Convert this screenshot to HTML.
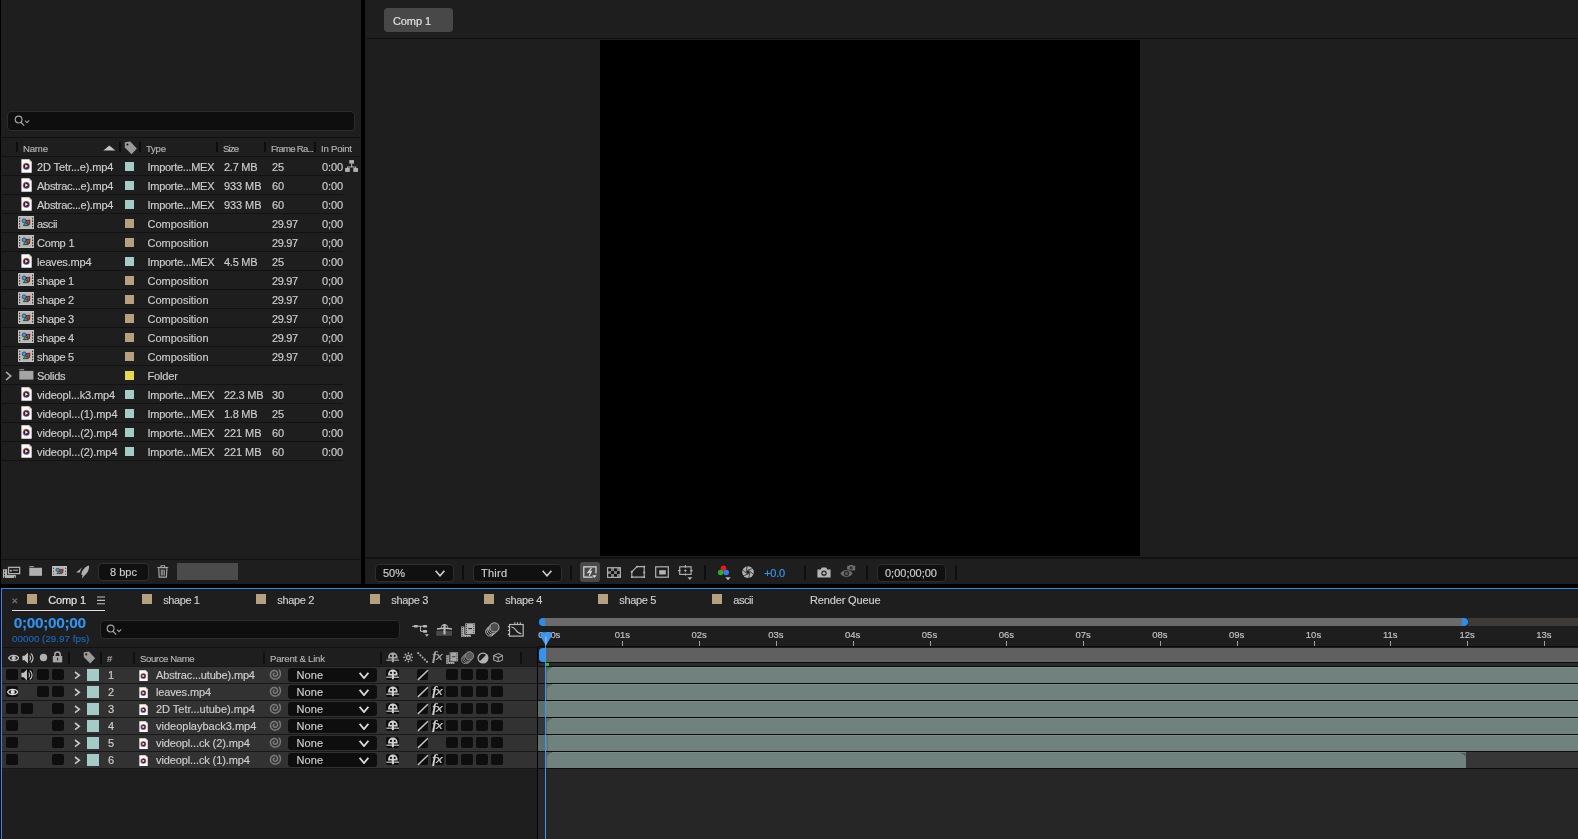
<!DOCTYPE html>
<html lang="en"><head><meta charset="utf-8"><title>After Effects</title>
<style>
html,body{margin:0;padding:0;background:#000;}
body{width:1578px;height:839px;overflow:hidden;position:relative;font-family:"Liberation Sans",sans-serif;}
#app{position:absolute;left:0;top:0;width:1578px;height:839px;overflow:hidden;background:#000;will-change:transform;}
#app div,#app span,#app svg{position:absolute;display:block;}
#app span{white-space:nowrap;-webkit-text-stroke:0.16px;}
</style></head><body><div id="app">
<div style="left:1px;top:0px;width:360px;height:584px;background:#1e1e1e;"></div>
<div style="left:7px;top:111px;width:348px;height:20px;background:#0e0e0e;border:1px solid #2c2c2c;border-radius:4px;box-sizing:border-box;"></div>
<svg style="left:14px;top:115px;" width="17" height="12" viewBox="0 0 17 12"><circle cx="4.6" cy="4.6" r="3.4" fill="none" stroke="#a0a0a0" stroke-width="1.2"/><path d="M7 7.2 L10.2 10.6" stroke="#a0a0a0" stroke-width="1.3" fill="none"/><path d="M11 5.6 L13 7.6 L15.2 5.4" stroke="#a0a0a0" stroke-width="1.1" fill="none"/></svg>
<div style="left:2px;top:137px;width:358px;height:1px;background:#121212;"></div>
<div style="left:2px;top:156px;width:358px;height:1px;background:#121212;"></div>
<div style="left:16.3px;top:142px;width:2px;height:10px;background:#0c0c0c;"></div>
<div style="left:118.5px;top:142px;width:2px;height:10px;background:#0c0c0c;"></div>
<div style="left:139.4px;top:142px;width:2px;height:10px;background:#0c0c0c;"></div>
<div style="left:216.3px;top:142px;width:2px;height:10px;background:#0c0c0c;"></div>
<div style="left:264.4px;top:142px;width:2px;height:10px;background:#0c0c0c;"></div>
<div style="left:314px;top:142px;width:2px;height:10px;background:#0c0c0c;"></div>
<span style="left:23.00px;top:144.07px;font-size:9.6px;line-height:9.6px;color:#b2b2b2;letter-spacing:-0.203px;">Name</span>
<svg style="left:103px;top:144.5px;" width="13" height="6" viewBox="0 0 13 6"><path d="M0.3 5.6 L6.3 0.4 L12.3 5.6 Z" fill="#c4c4c4"/></svg>
<svg style="left:124px;top:141px;" width="14.0" height="14.0" viewBox="0 0 14 14"><path d="M0.8 1.2 L6.2 0.6 L12.8 7.6 L7.6 13.2 L0.8 6.4 Z" fill="#9a9a9a"/><circle cx="3.4" cy="3.6" r="1.1" fill="#1e1e1e"/></svg>
<span style="left:146.00px;top:144.07px;font-size:9.6px;line-height:9.6px;color:#b2b2b2;letter-spacing:-0.271px;">Type</span>
<span style="left:223.00px;top:144.07px;font-size:9.6px;line-height:9.6px;color:#b2b2b2;letter-spacing:-0.892px;">Size</span>
<span style="left:271.00px;top:144.07px;font-size:9.6px;line-height:9.6px;color:#b2b2b2;letter-spacing:-0.768px;">Frame Ra...</span>
<span style="left:321.00px;top:144.07px;font-size:9.6px;line-height:9.6px;color:#b2b2b2;letter-spacing:-0.222px;">In Point</span>
<div style="left:2px;top:175px;width:341px;height:1px;background:#121212;"></div>
<svg style="left:20.5px;top:159px;" width="11.0" height="14.0" viewBox="0 0 11 14"><defs><linearGradient id="rg" x1="0" y1="0" x2="0" y2="1"><stop offset="0" stop-color="#e8833a"/><stop offset="0.55" stop-color="#b0508a"/><stop offset="1" stop-color="#6a3fb0"/></linearGradient></defs><path d="M0.4 0.3 H8.2 L10.7 2.8 V13.7 H0.4 Z" fill="#fbfbfb"/><path d="M8.2 0.3 V2.8 H10.7 Z" fill="#bdbdbd"/><circle cx="5.3" cy="7.2" r="3.5" fill="url(#rg)"/><circle cx="5.3" cy="7.2" r="2.6" fill="#2a2230"/><path d="M4.3 5.5 L7.0 7.2 L4.3 8.9 Z" fill="#fff"/></svg>
<span style="left:37.00px;top:161.69px;font-size:11px;line-height:11px;color:#cdcdcd;letter-spacing:-0.110px;">2D Tetr...e).mp4</span>
<div style="left:125px;top:162px;width:9px;height:9px;background:#a5cbc7;"></div>
<span style="left:147.50px;top:161.69px;font-size:11px;line-height:11px;color:#cdcdcd;letter-spacing:-0.275px;">Importe...MEX</span>
<span style="left:224.00px;top:161.69px;font-size:11px;line-height:11px;color:#cdcdcd;letter-spacing:-0.270px;">2.7 MB</span>
<span style="left:272.00px;top:161.69px;font-size:11px;line-height:11px;color:#cdcdcd;letter-spacing:-0.236px;">25</span>
<span style="left:322.00px;top:161.69px;font-size:11px;line-height:11px;color:#cdcdcd;letter-spacing:-0.137px;">0:00</span>
<div style="left:2px;top:194px;width:341px;height:1px;background:#121212;"></div>
<svg style="left:20.5px;top:178px;" width="11.0" height="14.0" viewBox="0 0 11 14"><defs><linearGradient id="rg" x1="0" y1="0" x2="0" y2="1"><stop offset="0" stop-color="#e8833a"/><stop offset="0.55" stop-color="#b0508a"/><stop offset="1" stop-color="#6a3fb0"/></linearGradient></defs><path d="M0.4 0.3 H8.2 L10.7 2.8 V13.7 H0.4 Z" fill="#fbfbfb"/><path d="M8.2 0.3 V2.8 H10.7 Z" fill="#bdbdbd"/><circle cx="5.3" cy="7.2" r="3.5" fill="url(#rg)"/><circle cx="5.3" cy="7.2" r="2.6" fill="#2a2230"/><path d="M4.3 5.5 L7.0 7.2 L4.3 8.9 Z" fill="#fff"/></svg>
<span style="left:37.00px;top:180.69px;font-size:11px;line-height:11px;color:#cdcdcd;letter-spacing:-0.287px;">Abstrac...e).mp4</span>
<div style="left:125px;top:181px;width:9px;height:9px;background:#a5cbc7;"></div>
<span style="left:147.50px;top:180.69px;font-size:11px;line-height:11px;color:#cdcdcd;letter-spacing:-0.275px;">Importe...MEX</span>
<span style="left:224.00px;top:180.69px;font-size:11px;line-height:11px;color:#cdcdcd;letter-spacing:-0.082px;">933 MB</span>
<span style="left:272.00px;top:180.69px;font-size:11px;line-height:11px;color:#cdcdcd;letter-spacing:-0.236px;">60</span>
<span style="left:322.00px;top:180.69px;font-size:11px;line-height:11px;color:#cdcdcd;letter-spacing:-0.137px;">0:00</span>
<div style="left:2px;top:213px;width:341px;height:1px;background:#121212;"></div>
<svg style="left:20.5px;top:197px;" width="11.0" height="14.0" viewBox="0 0 11 14"><defs><linearGradient id="rg" x1="0" y1="0" x2="0" y2="1"><stop offset="0" stop-color="#e8833a"/><stop offset="0.55" stop-color="#b0508a"/><stop offset="1" stop-color="#6a3fb0"/></linearGradient></defs><path d="M0.4 0.3 H8.2 L10.7 2.8 V13.7 H0.4 Z" fill="#fbfbfb"/><path d="M8.2 0.3 V2.8 H10.7 Z" fill="#bdbdbd"/><circle cx="5.3" cy="7.2" r="3.5" fill="url(#rg)"/><circle cx="5.3" cy="7.2" r="2.6" fill="#2a2230"/><path d="M4.3 5.5 L7.0 7.2 L4.3 8.9 Z" fill="#fff"/></svg>
<span style="left:37.00px;top:199.69px;font-size:11px;line-height:11px;color:#cdcdcd;letter-spacing:-0.287px;">Abstrac...e).mp4</span>
<div style="left:125px;top:200px;width:9px;height:9px;background:#a5cbc7;"></div>
<span style="left:147.50px;top:199.69px;font-size:11px;line-height:11px;color:#cdcdcd;letter-spacing:-0.275px;">Importe...MEX</span>
<span style="left:224.00px;top:199.69px;font-size:11px;line-height:11px;color:#cdcdcd;letter-spacing:-0.082px;">933 MB</span>
<span style="left:272.00px;top:199.69px;font-size:11px;line-height:11px;color:#cdcdcd;letter-spacing:-0.236px;">60</span>
<span style="left:322.00px;top:199.69px;font-size:11px;line-height:11px;color:#cdcdcd;letter-spacing:-0.137px;">0:00</span>
<div style="left:2px;top:232px;width:341px;height:1px;background:#121212;"></div>
<svg style="left:17.8px;top:216px;" width="16.3" height="13" viewBox="0 0 16.3 13" preserveAspectRatio="none"><rect x="0" y="0" width="16.3" height="13" rx="0.7" fill="#c2c2c2"/><rect x="3.3" y="0.8" width="9.7" height="11.4" fill="#b6b6b6"/><rect x="1.15" y="1.57" width="1.1" height="1.6" rx="0.5" fill="#2a2a2a"/><rect x="14.05" y="1.57" width="1.1" height="1.6" rx="0.5" fill="#2a2a2a"/><rect x="1.15" y="4.33" width="1.1" height="1.6" rx="0.5" fill="#2a2a2a"/><rect x="14.05" y="4.33" width="1.1" height="1.6" rx="0.5" fill="#2a2a2a"/><rect x="1.15" y="7.08" width="1.1" height="1.6" rx="0.5" fill="#2a2a2a"/><rect x="14.05" y="7.08" width="1.1" height="1.6" rx="0.5" fill="#2a2a2a"/><rect x="1.15" y="9.82" width="1.1" height="1.6" rx="0.5" fill="#2a2a2a"/><rect x="14.05" y="9.82" width="1.1" height="1.6" rx="0.5" fill="#2a2a2a"/><path d="M8.0 4.6 L11.9 4.2 L11.5 8.4 L10.3 8.9 Z" fill="#e8331c" stroke="#1c1c1c" stroke-width="0.7" stroke-linejoin="round"/><path d="M5.3 9.6 L7.7 6.4 L10.2 9.6 Z" fill="#21b573" stroke="#1c1c1c" stroke-width="0.7" stroke-linejoin="round"/><circle cx="6.1" cy="4.9" r="2.0" fill="#3a9bf4" stroke="#1c1c1c" stroke-width="0.6"/></svg>
<span style="left:37.00px;top:218.69px;font-size:11px;line-height:11px;color:#cdcdcd;letter-spacing:-0.376px;">ascii</span>
<div style="left:125px;top:219px;width:9px;height:9px;background:#b5a17f;"></div>
<span style="left:147.50px;top:218.69px;font-size:11px;line-height:11px;color:#cdcdcd;letter-spacing:-0.014px;">Composition</span>
<span style="left:272.00px;top:218.69px;font-size:11px;line-height:11px;color:#cdcdcd;letter-spacing:-0.382px;">29.97</span>
<span style="left:322.00px;top:218.69px;font-size:11px;line-height:11px;color:#cdcdcd;letter-spacing:-0.137px;">0;00</span>
<div style="left:2px;top:251px;width:341px;height:1px;background:#121212;"></div>
<svg style="left:17.8px;top:235px;" width="16.3" height="13" viewBox="0 0 16.3 13" preserveAspectRatio="none"><rect x="0" y="0" width="16.3" height="13" rx="0.7" fill="#c2c2c2"/><rect x="3.3" y="0.8" width="9.7" height="11.4" fill="#b6b6b6"/><rect x="1.15" y="1.57" width="1.1" height="1.6" rx="0.5" fill="#2a2a2a"/><rect x="14.05" y="1.57" width="1.1" height="1.6" rx="0.5" fill="#2a2a2a"/><rect x="1.15" y="4.33" width="1.1" height="1.6" rx="0.5" fill="#2a2a2a"/><rect x="14.05" y="4.33" width="1.1" height="1.6" rx="0.5" fill="#2a2a2a"/><rect x="1.15" y="7.08" width="1.1" height="1.6" rx="0.5" fill="#2a2a2a"/><rect x="14.05" y="7.08" width="1.1" height="1.6" rx="0.5" fill="#2a2a2a"/><rect x="1.15" y="9.82" width="1.1" height="1.6" rx="0.5" fill="#2a2a2a"/><rect x="14.05" y="9.82" width="1.1" height="1.6" rx="0.5" fill="#2a2a2a"/><path d="M8.0 4.6 L11.9 4.2 L11.5 8.4 L10.3 8.9 Z" fill="#e8331c" stroke="#1c1c1c" stroke-width="0.7" stroke-linejoin="round"/><path d="M5.3 9.6 L7.7 6.4 L10.2 9.6 Z" fill="#21b573" stroke="#1c1c1c" stroke-width="0.7" stroke-linejoin="round"/><circle cx="6.1" cy="4.9" r="2.0" fill="#3a9bf4" stroke="#1c1c1c" stroke-width="0.6"/></svg>
<span style="left:37.00px;top:237.69px;font-size:11px;line-height:11px;color:#cdcdcd;letter-spacing:-0.203px;">Comp 1</span>
<div style="left:125px;top:238px;width:9px;height:9px;background:#b5a17f;"></div>
<span style="left:147.50px;top:237.69px;font-size:11px;line-height:11px;color:#cdcdcd;letter-spacing:-0.014px;">Composition</span>
<span style="left:272.00px;top:237.69px;font-size:11px;line-height:11px;color:#cdcdcd;letter-spacing:-0.382px;">29.97</span>
<span style="left:322.00px;top:237.69px;font-size:11px;line-height:11px;color:#cdcdcd;letter-spacing:-0.137px;">0;00</span>
<div style="left:2px;top:270px;width:341px;height:1px;background:#121212;"></div>
<svg style="left:20.5px;top:254px;" width="11.0" height="14.0" viewBox="0 0 11 14"><defs><linearGradient id="rg" x1="0" y1="0" x2="0" y2="1"><stop offset="0" stop-color="#e8833a"/><stop offset="0.55" stop-color="#b0508a"/><stop offset="1" stop-color="#6a3fb0"/></linearGradient></defs><path d="M0.4 0.3 H8.2 L10.7 2.8 V13.7 H0.4 Z" fill="#fbfbfb"/><path d="M8.2 0.3 V2.8 H10.7 Z" fill="#bdbdbd"/><circle cx="5.3" cy="7.2" r="3.5" fill="url(#rg)"/><circle cx="5.3" cy="7.2" r="2.6" fill="#2a2230"/><path d="M4.3 5.5 L7.0 7.2 L4.3 8.9 Z" fill="#fff"/></svg>
<span style="left:37.00px;top:256.69px;font-size:11px;line-height:11px;color:#cdcdcd;letter-spacing:-0.195px;">leaves.mp4</span>
<div style="left:125px;top:257px;width:9px;height:9px;background:#a5cbc7;"></div>
<span style="left:147.50px;top:256.69px;font-size:11px;line-height:11px;color:#cdcdcd;letter-spacing:-0.275px;">Importe...MEX</span>
<span style="left:224.00px;top:256.69px;font-size:11px;line-height:11px;color:#cdcdcd;letter-spacing:-0.270px;">4.5 MB</span>
<span style="left:272.00px;top:256.69px;font-size:11px;line-height:11px;color:#cdcdcd;letter-spacing:-0.236px;">25</span>
<span style="left:322.00px;top:256.69px;font-size:11px;line-height:11px;color:#cdcdcd;letter-spacing:-0.137px;">0:00</span>
<div style="left:2px;top:289px;width:341px;height:1px;background:#121212;"></div>
<svg style="left:17.8px;top:273px;" width="16.3" height="13" viewBox="0 0 16.3 13" preserveAspectRatio="none"><rect x="0" y="0" width="16.3" height="13" rx="0.7" fill="#c2c2c2"/><rect x="3.3" y="0.8" width="9.7" height="11.4" fill="#b6b6b6"/><rect x="1.15" y="1.57" width="1.1" height="1.6" rx="0.5" fill="#2a2a2a"/><rect x="14.05" y="1.57" width="1.1" height="1.6" rx="0.5" fill="#2a2a2a"/><rect x="1.15" y="4.33" width="1.1" height="1.6" rx="0.5" fill="#2a2a2a"/><rect x="14.05" y="4.33" width="1.1" height="1.6" rx="0.5" fill="#2a2a2a"/><rect x="1.15" y="7.08" width="1.1" height="1.6" rx="0.5" fill="#2a2a2a"/><rect x="14.05" y="7.08" width="1.1" height="1.6" rx="0.5" fill="#2a2a2a"/><rect x="1.15" y="9.82" width="1.1" height="1.6" rx="0.5" fill="#2a2a2a"/><rect x="14.05" y="9.82" width="1.1" height="1.6" rx="0.5" fill="#2a2a2a"/><path d="M8.0 4.6 L11.9 4.2 L11.5 8.4 L10.3 8.9 Z" fill="#e8331c" stroke="#1c1c1c" stroke-width="0.7" stroke-linejoin="round"/><path d="M5.3 9.6 L7.7 6.4 L10.2 9.6 Z" fill="#21b573" stroke="#1c1c1c" stroke-width="0.7" stroke-linejoin="round"/><circle cx="6.1" cy="4.9" r="2.0" fill="#3a9bf4" stroke="#1c1c1c" stroke-width="0.6"/></svg>
<span style="left:37.00px;top:275.69px;font-size:11px;line-height:11px;color:#cdcdcd;letter-spacing:-0.358px;">shape 1</span>
<div style="left:125px;top:276px;width:9px;height:9px;background:#b5a17f;"></div>
<span style="left:147.50px;top:275.69px;font-size:11px;line-height:11px;color:#cdcdcd;letter-spacing:-0.014px;">Composition</span>
<span style="left:272.00px;top:275.69px;font-size:11px;line-height:11px;color:#cdcdcd;letter-spacing:-0.382px;">29.97</span>
<span style="left:322.00px;top:275.69px;font-size:11px;line-height:11px;color:#cdcdcd;letter-spacing:-0.137px;">0;00</span>
<div style="left:2px;top:308px;width:341px;height:1px;background:#121212;"></div>
<svg style="left:17.8px;top:292px;" width="16.3" height="13" viewBox="0 0 16.3 13" preserveAspectRatio="none"><rect x="0" y="0" width="16.3" height="13" rx="0.7" fill="#c2c2c2"/><rect x="3.3" y="0.8" width="9.7" height="11.4" fill="#b6b6b6"/><rect x="1.15" y="1.57" width="1.1" height="1.6" rx="0.5" fill="#2a2a2a"/><rect x="14.05" y="1.57" width="1.1" height="1.6" rx="0.5" fill="#2a2a2a"/><rect x="1.15" y="4.33" width="1.1" height="1.6" rx="0.5" fill="#2a2a2a"/><rect x="14.05" y="4.33" width="1.1" height="1.6" rx="0.5" fill="#2a2a2a"/><rect x="1.15" y="7.08" width="1.1" height="1.6" rx="0.5" fill="#2a2a2a"/><rect x="14.05" y="7.08" width="1.1" height="1.6" rx="0.5" fill="#2a2a2a"/><rect x="1.15" y="9.82" width="1.1" height="1.6" rx="0.5" fill="#2a2a2a"/><rect x="14.05" y="9.82" width="1.1" height="1.6" rx="0.5" fill="#2a2a2a"/><path d="M8.0 4.6 L11.9 4.2 L11.5 8.4 L10.3 8.9 Z" fill="#e8331c" stroke="#1c1c1c" stroke-width="0.7" stroke-linejoin="round"/><path d="M5.3 9.6 L7.7 6.4 L10.2 9.6 Z" fill="#21b573" stroke="#1c1c1c" stroke-width="0.7" stroke-linejoin="round"/><circle cx="6.1" cy="4.9" r="2.0" fill="#3a9bf4" stroke="#1c1c1c" stroke-width="0.6"/></svg>
<span style="left:37.00px;top:294.69px;font-size:11px;line-height:11px;color:#cdcdcd;letter-spacing:-0.358px;">shape 2</span>
<div style="left:125px;top:295px;width:9px;height:9px;background:#b5a17f;"></div>
<span style="left:147.50px;top:294.69px;font-size:11px;line-height:11px;color:#cdcdcd;letter-spacing:-0.014px;">Composition</span>
<span style="left:272.00px;top:294.69px;font-size:11px;line-height:11px;color:#cdcdcd;letter-spacing:-0.382px;">29.97</span>
<span style="left:322.00px;top:294.69px;font-size:11px;line-height:11px;color:#cdcdcd;letter-spacing:-0.137px;">0;00</span>
<div style="left:2px;top:327px;width:341px;height:1px;background:#121212;"></div>
<svg style="left:17.8px;top:311px;" width="16.3" height="13" viewBox="0 0 16.3 13" preserveAspectRatio="none"><rect x="0" y="0" width="16.3" height="13" rx="0.7" fill="#c2c2c2"/><rect x="3.3" y="0.8" width="9.7" height="11.4" fill="#b6b6b6"/><rect x="1.15" y="1.57" width="1.1" height="1.6" rx="0.5" fill="#2a2a2a"/><rect x="14.05" y="1.57" width="1.1" height="1.6" rx="0.5" fill="#2a2a2a"/><rect x="1.15" y="4.33" width="1.1" height="1.6" rx="0.5" fill="#2a2a2a"/><rect x="14.05" y="4.33" width="1.1" height="1.6" rx="0.5" fill="#2a2a2a"/><rect x="1.15" y="7.08" width="1.1" height="1.6" rx="0.5" fill="#2a2a2a"/><rect x="14.05" y="7.08" width="1.1" height="1.6" rx="0.5" fill="#2a2a2a"/><rect x="1.15" y="9.82" width="1.1" height="1.6" rx="0.5" fill="#2a2a2a"/><rect x="14.05" y="9.82" width="1.1" height="1.6" rx="0.5" fill="#2a2a2a"/><path d="M8.0 4.6 L11.9 4.2 L11.5 8.4 L10.3 8.9 Z" fill="#e8331c" stroke="#1c1c1c" stroke-width="0.7" stroke-linejoin="round"/><path d="M5.3 9.6 L7.7 6.4 L10.2 9.6 Z" fill="#21b573" stroke="#1c1c1c" stroke-width="0.7" stroke-linejoin="round"/><circle cx="6.1" cy="4.9" r="2.0" fill="#3a9bf4" stroke="#1c1c1c" stroke-width="0.6"/></svg>
<span style="left:37.00px;top:313.69px;font-size:11px;line-height:11px;color:#cdcdcd;letter-spacing:-0.358px;">shape 3</span>
<div style="left:125px;top:314px;width:9px;height:9px;background:#b5a17f;"></div>
<span style="left:147.50px;top:313.69px;font-size:11px;line-height:11px;color:#cdcdcd;letter-spacing:-0.014px;">Composition</span>
<span style="left:272.00px;top:313.69px;font-size:11px;line-height:11px;color:#cdcdcd;letter-spacing:-0.382px;">29.97</span>
<span style="left:322.00px;top:313.69px;font-size:11px;line-height:11px;color:#cdcdcd;letter-spacing:-0.137px;">0;00</span>
<div style="left:2px;top:346px;width:341px;height:1px;background:#121212;"></div>
<svg style="left:17.8px;top:330px;" width="16.3" height="13" viewBox="0 0 16.3 13" preserveAspectRatio="none"><rect x="0" y="0" width="16.3" height="13" rx="0.7" fill="#c2c2c2"/><rect x="3.3" y="0.8" width="9.7" height="11.4" fill="#b6b6b6"/><rect x="1.15" y="1.57" width="1.1" height="1.6" rx="0.5" fill="#2a2a2a"/><rect x="14.05" y="1.57" width="1.1" height="1.6" rx="0.5" fill="#2a2a2a"/><rect x="1.15" y="4.33" width="1.1" height="1.6" rx="0.5" fill="#2a2a2a"/><rect x="14.05" y="4.33" width="1.1" height="1.6" rx="0.5" fill="#2a2a2a"/><rect x="1.15" y="7.08" width="1.1" height="1.6" rx="0.5" fill="#2a2a2a"/><rect x="14.05" y="7.08" width="1.1" height="1.6" rx="0.5" fill="#2a2a2a"/><rect x="1.15" y="9.82" width="1.1" height="1.6" rx="0.5" fill="#2a2a2a"/><rect x="14.05" y="9.82" width="1.1" height="1.6" rx="0.5" fill="#2a2a2a"/><path d="M8.0 4.6 L11.9 4.2 L11.5 8.4 L10.3 8.9 Z" fill="#e8331c" stroke="#1c1c1c" stroke-width="0.7" stroke-linejoin="round"/><path d="M5.3 9.6 L7.7 6.4 L10.2 9.6 Z" fill="#21b573" stroke="#1c1c1c" stroke-width="0.7" stroke-linejoin="round"/><circle cx="6.1" cy="4.9" r="2.0" fill="#3a9bf4" stroke="#1c1c1c" stroke-width="0.6"/></svg>
<span style="left:37.00px;top:332.69px;font-size:11px;line-height:11px;color:#cdcdcd;letter-spacing:-0.358px;">shape 4</span>
<div style="left:125px;top:333px;width:9px;height:9px;background:#b5a17f;"></div>
<span style="left:147.50px;top:332.69px;font-size:11px;line-height:11px;color:#cdcdcd;letter-spacing:-0.014px;">Composition</span>
<span style="left:272.00px;top:332.69px;font-size:11px;line-height:11px;color:#cdcdcd;letter-spacing:-0.382px;">29.97</span>
<span style="left:322.00px;top:332.69px;font-size:11px;line-height:11px;color:#cdcdcd;letter-spacing:-0.137px;">0;00</span>
<div style="left:2px;top:365px;width:341px;height:1px;background:#121212;"></div>
<svg style="left:17.8px;top:349px;" width="16.3" height="13" viewBox="0 0 16.3 13" preserveAspectRatio="none"><rect x="0" y="0" width="16.3" height="13" rx="0.7" fill="#c2c2c2"/><rect x="3.3" y="0.8" width="9.7" height="11.4" fill="#b6b6b6"/><rect x="1.15" y="1.57" width="1.1" height="1.6" rx="0.5" fill="#2a2a2a"/><rect x="14.05" y="1.57" width="1.1" height="1.6" rx="0.5" fill="#2a2a2a"/><rect x="1.15" y="4.33" width="1.1" height="1.6" rx="0.5" fill="#2a2a2a"/><rect x="14.05" y="4.33" width="1.1" height="1.6" rx="0.5" fill="#2a2a2a"/><rect x="1.15" y="7.08" width="1.1" height="1.6" rx="0.5" fill="#2a2a2a"/><rect x="14.05" y="7.08" width="1.1" height="1.6" rx="0.5" fill="#2a2a2a"/><rect x="1.15" y="9.82" width="1.1" height="1.6" rx="0.5" fill="#2a2a2a"/><rect x="14.05" y="9.82" width="1.1" height="1.6" rx="0.5" fill="#2a2a2a"/><path d="M8.0 4.6 L11.9 4.2 L11.5 8.4 L10.3 8.9 Z" fill="#e8331c" stroke="#1c1c1c" stroke-width="0.7" stroke-linejoin="round"/><path d="M5.3 9.6 L7.7 6.4 L10.2 9.6 Z" fill="#21b573" stroke="#1c1c1c" stroke-width="0.7" stroke-linejoin="round"/><circle cx="6.1" cy="4.9" r="2.0" fill="#3a9bf4" stroke="#1c1c1c" stroke-width="0.6"/></svg>
<span style="left:37.00px;top:351.69px;font-size:11px;line-height:11px;color:#cdcdcd;letter-spacing:-0.358px;">shape 5</span>
<div style="left:125px;top:352px;width:9px;height:9px;background:#b5a17f;"></div>
<span style="left:147.50px;top:351.69px;font-size:11px;line-height:11px;color:#cdcdcd;letter-spacing:-0.014px;">Composition</span>
<span style="left:272.00px;top:351.69px;font-size:11px;line-height:11px;color:#cdcdcd;letter-spacing:-0.382px;">29.97</span>
<span style="left:322.00px;top:351.69px;font-size:11px;line-height:11px;color:#cdcdcd;letter-spacing:-0.137px;">0;00</span>
<div style="left:2px;top:384px;width:341px;height:1px;background:#121212;"></div>
<svg style="left:19px;top:369px;" width="15.0" height="11.0" viewBox="0 0 15 11"><path d="M0.3 0.2 H5.2 V1.2 H0.3 Z" fill="#a4a4a4"/><path d="M0.3 1.9 H14.4 V10.6 H0.3 Z" fill="#a4a4a4"/></svg>
<svg style="left:5px;top:370.5px;" width="7" height="10" viewBox="0 0 7 10"><path d="M1 1 L5.7 5.0 L1 9" stroke="#b4b4b4" stroke-width="1.6" fill="none"/></svg>
<span style="left:37.00px;top:370.69px;font-size:11px;line-height:11px;color:#cdcdcd;letter-spacing:-0.292px;">Solids</span>
<div style="left:125px;top:371px;width:9px;height:9px;background:#e6d84e;"></div>
<span style="left:147.50px;top:370.69px;font-size:11px;line-height:11px;color:#cdcdcd;letter-spacing:-0.136px;">Folder</span>
<div style="left:2px;top:403px;width:341px;height:1px;background:#121212;"></div>
<svg style="left:20.5px;top:387px;" width="11.0" height="14.0" viewBox="0 0 11 14"><defs><linearGradient id="rg" x1="0" y1="0" x2="0" y2="1"><stop offset="0" stop-color="#e8833a"/><stop offset="0.55" stop-color="#b0508a"/><stop offset="1" stop-color="#6a3fb0"/></linearGradient></defs><path d="M0.4 0.3 H8.2 L10.7 2.8 V13.7 H0.4 Z" fill="#fbfbfb"/><path d="M8.2 0.3 V2.8 H10.7 Z" fill="#bdbdbd"/><circle cx="5.3" cy="7.2" r="3.5" fill="url(#rg)"/><circle cx="5.3" cy="7.2" r="2.6" fill="#2a2230"/><path d="M4.3 5.5 L7.0 7.2 L4.3 8.9 Z" fill="#fff"/></svg>
<span style="left:37.00px;top:389.69px;font-size:11px;line-height:11px;color:#cdcdcd;letter-spacing:-0.140px;">videopl...k3.mp4</span>
<div style="left:125px;top:390px;width:9px;height:9px;background:#a5cbc7;"></div>
<span style="left:147.50px;top:389.69px;font-size:11px;line-height:11px;color:#cdcdcd;letter-spacing:-0.275px;">Importe...MEX</span>
<span style="left:224.00px;top:389.69px;font-size:11px;line-height:11px;color:#cdcdcd;letter-spacing:-0.244px;">22.3 MB</span>
<span style="left:272.00px;top:389.69px;font-size:11px;line-height:11px;color:#cdcdcd;letter-spacing:-0.236px;">30</span>
<span style="left:322.00px;top:389.69px;font-size:11px;line-height:11px;color:#cdcdcd;letter-spacing:-0.137px;">0:00</span>
<div style="left:2px;top:422px;width:341px;height:1px;background:#121212;"></div>
<svg style="left:20.5px;top:406px;" width="11.0" height="14.0" viewBox="0 0 11 14"><defs><linearGradient id="rg" x1="0" y1="0" x2="0" y2="1"><stop offset="0" stop-color="#e8833a"/><stop offset="0.55" stop-color="#b0508a"/><stop offset="1" stop-color="#6a3fb0"/></linearGradient></defs><path d="M0.4 0.3 H8.2 L10.7 2.8 V13.7 H0.4 Z" fill="#fbfbfb"/><path d="M8.2 0.3 V2.8 H10.7 Z" fill="#bdbdbd"/><circle cx="5.3" cy="7.2" r="3.5" fill="url(#rg)"/><circle cx="5.3" cy="7.2" r="2.6" fill="#2a2230"/><path d="M4.3 5.5 L7.0 7.2 L4.3 8.9 Z" fill="#fff"/></svg>
<span style="left:37.00px;top:408.69px;font-size:11px;line-height:11px;color:#cdcdcd;letter-spacing:-0.089px;">videopl...(1).mp4</span>
<div style="left:125px;top:409px;width:9px;height:9px;background:#a5cbc7;"></div>
<span style="left:147.50px;top:408.69px;font-size:11px;line-height:11px;color:#cdcdcd;letter-spacing:-0.275px;">Importe...MEX</span>
<span style="left:224.00px;top:408.69px;font-size:11px;line-height:11px;color:#cdcdcd;letter-spacing:-0.270px;">1.8 MB</span>
<span style="left:272.00px;top:408.69px;font-size:11px;line-height:11px;color:#cdcdcd;letter-spacing:-0.236px;">25</span>
<span style="left:322.00px;top:408.69px;font-size:11px;line-height:11px;color:#cdcdcd;letter-spacing:-0.137px;">0:00</span>
<div style="left:2px;top:441px;width:341px;height:1px;background:#121212;"></div>
<svg style="left:20.5px;top:425px;" width="11.0" height="14.0" viewBox="0 0 11 14"><defs><linearGradient id="rg" x1="0" y1="0" x2="0" y2="1"><stop offset="0" stop-color="#e8833a"/><stop offset="0.55" stop-color="#b0508a"/><stop offset="1" stop-color="#6a3fb0"/></linearGradient></defs><path d="M0.4 0.3 H8.2 L10.7 2.8 V13.7 H0.4 Z" fill="#fbfbfb"/><path d="M8.2 0.3 V2.8 H10.7 Z" fill="#bdbdbd"/><circle cx="5.3" cy="7.2" r="3.5" fill="url(#rg)"/><circle cx="5.3" cy="7.2" r="2.6" fill="#2a2230"/><path d="M4.3 5.5 L7.0 7.2 L4.3 8.9 Z" fill="#fff"/></svg>
<span style="left:37.00px;top:427.69px;font-size:11px;line-height:11px;color:#cdcdcd;letter-spacing:-0.089px;">videopl...(2).mp4</span>
<div style="left:125px;top:428px;width:9px;height:9px;background:#a5cbc7;"></div>
<span style="left:147.50px;top:427.69px;font-size:11px;line-height:11px;color:#cdcdcd;letter-spacing:-0.275px;">Importe...MEX</span>
<span style="left:224.00px;top:427.69px;font-size:11px;line-height:11px;color:#cdcdcd;letter-spacing:-0.082px;">221 MB</span>
<span style="left:272.00px;top:427.69px;font-size:11px;line-height:11px;color:#cdcdcd;letter-spacing:-0.236px;">60</span>
<span style="left:322.00px;top:427.69px;font-size:11px;line-height:11px;color:#cdcdcd;letter-spacing:-0.137px;">0:00</span>
<div style="left:2px;top:460px;width:341px;height:1px;background:#121212;"></div>
<svg style="left:20.5px;top:444px;" width="11.0" height="14.0" viewBox="0 0 11 14"><defs><linearGradient id="rg" x1="0" y1="0" x2="0" y2="1"><stop offset="0" stop-color="#e8833a"/><stop offset="0.55" stop-color="#b0508a"/><stop offset="1" stop-color="#6a3fb0"/></linearGradient></defs><path d="M0.4 0.3 H8.2 L10.7 2.8 V13.7 H0.4 Z" fill="#fbfbfb"/><path d="M8.2 0.3 V2.8 H10.7 Z" fill="#bdbdbd"/><circle cx="5.3" cy="7.2" r="3.5" fill="url(#rg)"/><circle cx="5.3" cy="7.2" r="2.6" fill="#2a2230"/><path d="M4.3 5.5 L7.0 7.2 L4.3 8.9 Z" fill="#fff"/></svg>
<span style="left:37.00px;top:446.69px;font-size:11px;line-height:11px;color:#cdcdcd;letter-spacing:-0.089px;">videopl...(2).mp4</span>
<div style="left:125px;top:447px;width:9px;height:9px;background:#a5cbc7;"></div>
<span style="left:147.50px;top:446.69px;font-size:11px;line-height:11px;color:#cdcdcd;letter-spacing:-0.275px;">Importe...MEX</span>
<span style="left:224.00px;top:446.69px;font-size:11px;line-height:11px;color:#cdcdcd;letter-spacing:-0.082px;">221 MB</span>
<span style="left:272.00px;top:446.69px;font-size:11px;line-height:11px;color:#cdcdcd;letter-spacing:-0.236px;">60</span>
<span style="left:322.00px;top:446.69px;font-size:11px;line-height:11px;color:#cdcdcd;letter-spacing:-0.137px;">0:00</span>
<svg style="left:345px;top:160px;" width="13.4" height="12.2" viewBox="0 0 13.4 12.2"><rect x="4.3" y="0.1" width="4.7" height="3.5" fill="#b2b2b2"/><rect x="0.1" y="8" width="4.7" height="3.9" fill="#b2b2b2"/><rect x="8.3" y="8" width="4.7" height="3.9" fill="#b2b2b2"/><path d="M6.65 3.5 V7.1 M2.45 8.1 V7 H10.65 V8.1" stroke="#b2b2b2" stroke-width="1.1" fill="none"/></svg>
<div style="left:2px;top:559px;width:358px;height:1px;background:#121212;"></div>
<svg style="left:3px;top:566px;" width="18" height="13" viewBox="0 0 18 13"><rect x="0" y="3.2" width="12.8" height="8.8" fill="#b0b0b0"/><rect x="1" y="4.6" width="0.9" height="1.5" fill="#1e1e1e"/><rect x="1" y="7.6" width="0.9" height="1.5" fill="#1e1e1e"/><rect x="1" y="10.4" width="0.9" height="1.6" fill="#1e1e1e"/><rect x="11" y="10.6" width="0.9" height="1.4" fill="#1e1e1e"/><rect x="4.1" y="0" width="13.9" height="9" fill="#1e1e1e"/><rect x="5.55" y="1.35" width="11.1" height="6.3" fill="#1e1e1e" stroke="#b0b0b0" stroke-width="1.3"/><rect x="7" y="3.8" width="1.9" height="1.7" fill="#b0b0b0"/><rect x="10" y="3.7" width="5" height="1" fill="#b0b0b0"/></svg>
<svg style="left:28.5px;top:565.6px;" width="13.950000000000001" height="10.23" viewBox="0 0 15 11"><path d="M0.3 0.2 H5.2 V1.2 H0.3 Z" fill="#b0b0b0"/><path d="M0.3 1.9 H14.4 V10.6 H0.3 Z" fill="#b0b0b0"/></svg>
<svg style="left:52px;top:565.8px;" width="15.3" height="10.3" viewBox="0 0 16.3 13" preserveAspectRatio="none"><rect x="0" y="0" width="16.3" height="13" rx="0.7" fill="#c2c2c2"/><rect x="3.3" y="0.8" width="9.7" height="11.4" fill="#b6b6b6"/><rect x="1.15" y="2.03" width="1.1" height="1.6" rx="0.5" fill="#2a2a2a"/><rect x="14.05" y="2.03" width="1.1" height="1.6" rx="0.5" fill="#2a2a2a"/><rect x="1.15" y="5.70" width="1.1" height="1.6" rx="0.5" fill="#2a2a2a"/><rect x="14.05" y="5.70" width="1.1" height="1.6" rx="0.5" fill="#2a2a2a"/><rect x="1.15" y="9.37" width="1.1" height="1.6" rx="0.5" fill="#2a2a2a"/><rect x="14.05" y="9.37" width="1.1" height="1.6" rx="0.5" fill="#2a2a2a"/><path d="M8.0 4.6 L11.9 4.2 L11.5 8.4 L10.3 8.9 Z" fill="#e8331c" stroke="#1c1c1c" stroke-width="0.7" stroke-linejoin="round"/><path d="M5.3 9.6 L7.7 6.4 L10.2 9.6 Z" fill="#21b573" stroke="#1c1c1c" stroke-width="0.7" stroke-linejoin="round"/><circle cx="6.1" cy="4.9" r="2.0" fill="#3a9bf4" stroke="#1c1c1c" stroke-width="0.6"/></svg>
<svg style="left:76px;top:564.5px;" width="14" height="14" viewBox="0 0 14 14"><path d="M13 0.5 C9 1.6 5.6 5.6 5.3 9.5 L7.5 10.5 C11 9 13.5 5 13 0.5 Z" fill="#b0b0b0"/><path d="M6.2 2.6 L0.1 7.6 L3.9 7.6 Q4.4 4.8 6.2 2.6 Z" fill="#b0b0b0"/><path d="M11.2 7.6 L5.9 13.6 L6.5 10.3 Q9.3 9.8 11.2 7.6 Z" fill="#b0b0b0"/></svg>
<div style="left:98px;top:563px;width:51px;height:18px;background:#101010;border:1px solid #303030;border-radius:4px;box-sizing:border-box;"></div>
<span style="left:110.00px;top:566.99px;font-size:11px;line-height:11px;color:#cdcdcd;letter-spacing:0.022px;">8 bpc</span>
<svg style="left:157px;top:565px;" width="12" height="13" viewBox="0 0 12 13"><path d="M0.4 2.6 H11.2" stroke="#a6a6a6" stroke-width="1.3"/><path d="M4 2.4 V0.8 H7.6 V2.4" stroke="#a6a6a6" stroke-width="1.1" fill="none"/><path d="M1.7 3.4 L2.2 12.2 H9.4 L9.9 3.4" stroke="#a6a6a6" stroke-width="1.2" fill="none"/><path d="M4.3 4.6 V10.6 M5.8 4.6 V10.6 M7.3 4.6 V10.6" stroke="#a6a6a6" stroke-width="1"/></svg>
<div style="left:177px;top:563px;width:61px;height:17px;background:#4b4b4b;"></div>
<div style="left:365px;top:0px;width:1213px;height:584px;background:#1e1e1e;"></div>
<div style="left:384px;top:8px;width:69px;height:24px;background:#484848;border-radius:4px;"></div>
<span style="left:393.00px;top:15.79px;font-size:11px;line-height:11px;color:#e2e2e2;letter-spacing:-0.103px;">Comp 1</span>
<div style="left:366px;top:38px;width:1212px;height:1px;background:#121212;"></div>
<div style="left:600px;top:40px;width:540px;height:516px;background:#000;"></div>
<div style="left:366px;top:557px;width:1212px;height:2px;background:#111;"></div>
<div style="left:374.5px;top:563.5px;width:79px;height:18px;background:#101010;border:1px solid #2e2e2e;border-radius:4px;box-sizing:border-box;"></div>
<span style="left:383.00px;top:568.09px;font-size:11px;line-height:11px;color:#cdcdcd;letter-spacing:-0.008px;">50%</span>
<svg style="left:435px;top:569.5px;" width="10" height="7" viewBox="0 0 10 7"><path d="M0.6 0.7 L5.0 5.7 L9.4 0.7" stroke="#d0d0d0" stroke-width="1.6" fill="none"/></svg>
<div style="left:462px;top:565px;width:2px;height:15px;background:#0f0f0f;"></div>
<div style="left:472.5px;top:563.5px;width:89px;height:18px;background:#101010;border:1px solid #2e2e2e;border-radius:4px;box-sizing:border-box;"></div>
<span style="left:481.00px;top:568.09px;font-size:11px;line-height:11px;color:#cdcdcd;letter-spacing:0.234px;">Third</span>
<svg style="left:542px;top:569.5px;" width="10" height="7" viewBox="0 0 10 7"><path d="M0.6 0.7 L5.0 5.7 L9.4 0.7" stroke="#d0d0d0" stroke-width="1.6" fill="none"/></svg>
<div style="left:570px;top:565px;width:2px;height:15px;background:#0f0f0f;"></div>
<div style="left:580px;top:562px;width:20px;height:20px;background:#4a4a4a;border-radius:3px;"></div>
<svg style="left:583px;top:565px;" width="16" height="14" viewBox="0 0 16 14"><path d="M9.6 12.2 H0.8 V1.8 H13 V8.6" fill="none" stroke="#dcdcdc" stroke-width="1.2"/><path d="M8.4 3.2 L5.2 7.4 L8.2 6.6 L6.2 10.8" fill="none" stroke="#dcdcdc" stroke-width="1.3" stroke-linejoin="miter"/><path d="M9.2 10.3 H13.6 L11.4 12.9 Z" fill="#dcdcdc"/></svg>
<svg style="left:607px;top:567px;" width="14" height="11.4" viewBox="0 0 14 11.4"><rect x="0.7" y="0.8" width="12.6" height="9.5" fill="#7e7e7e"/><rect x="1.10" y="1.20" width="2.95" height="2.9" fill="#121212"/><rect x="7.00" y="1.20" width="2.95" height="2.9" fill="#121212"/><rect x="4.05" y="4.10" width="2.95" height="2.9" fill="#121212"/><rect x="9.95" y="4.10" width="2.95" height="2.9" fill="#121212"/><rect x="1.10" y="7.00" width="2.95" height="2.9" fill="#121212"/><rect x="7.00" y="7.00" width="2.95" height="2.9" fill="#121212"/><rect x="0.6" y="0.7" width="12.8" height="9.7" fill="none" stroke="#b4b4b4" stroke-width="1.1"/></svg>
<svg style="left:630px;top:565px;" width="16" height="14" viewBox="0 0 16 14"><path d="M1.8 6.8 L7 1.6 L14.2 1.6 L14.2 7.4 L14.2 12.1 L1.8 12.1 Z" fill="none" stroke="#b4b4b4" stroke-width="1.1"/><rect x="0.85" y="5.85" width="1.9" height="1.9" rx="0.5" fill="#b4b4b4"/><rect x="6.05" y="0.65" width="1.9" height="1.9" rx="0.5" fill="#b4b4b4"/><rect x="13.25" y="0.65" width="1.9" height="1.9" rx="0.5" fill="#b4b4b4"/><rect x="13.25" y="6.45" width="1.9" height="1.9" rx="0.5" fill="#b4b4b4"/><rect x="13.25" y="11.15" width="1.9" height="1.9" rx="0.5" fill="#b4b4b4"/><rect x="0.85" y="11.15" width="1.9" height="1.9" rx="0.5" fill="#b4b4b4"/></svg>
<svg style="left:655px;top:566px;" width="15" height="12.4" viewBox="0 0 15 12.4"><rect x="0.7" y="0.8" width="12.6" height="10.4" fill="none" stroke="#b4b4b4" stroke-width="1.2"/><rect x="4.2" y="4.2" width="6.6" height="4.3" fill="#b4b4b4"/></svg>
<svg style="left:678px;top:565px;" width="16" height="15.4" viewBox="0 0 16 15.4"><rect x="1.7" y="1.8" width="11.4" height="7.6" fill="none" stroke="#b4b4b4" stroke-width="1.1"/><path d="M7.4 0 V2.8 M7.4 8.4 V10.4 M0 5.6 H2.6 M12.2 5.6 H14.6 M7.4 4.5 V6.7 M6.3 5.6 H8.5" stroke="#b4b4b4" stroke-width="1.1"/><path d="M9.5 12.2 H14.3 L11.9 15 Z" fill="#b4b4b4"/></svg>
<div style="left:704px;top:565px;width:2px;height:15px;background:#0f0f0f;"></div>
<svg style="left:717px;top:565px;" width="15" height="16" viewBox="0 0 15 16"><circle cx="6.5" cy="3.3" r="2.8" fill="#f01414"/><circle cx="3.7" cy="7.5" r="2.8" fill="#1eb428"/><circle cx="9.2" cy="7.5" r="2.8" fill="#3c78f0"/><path d="M8.3 12.2 H13.7 L11 15.2 Z" fill="#c0c0c0"/></svg>
<svg style="left:741px;top:565px;" width="14" height="14.4" viewBox="0 0 14 14.4"><circle cx="7.0" cy="7.1" r="5.8999999999999995" fill="#b0b0b0"/><polygon points="8.91,7.69 7.44,9.05 5.53,8.46 5.09,6.51 6.56,5.15 8.47,5.74" fill="#222"/><path d="M8.91 7.69 L7.74 13.16 M7.44 9.05 L2.12 10.76 M5.53 8.46 L1.39 4.71 M5.09 6.51 L6.26 1.04 M6.56 5.15 L11.88 3.44 M8.47 5.74 L12.61 9.49 " stroke="#2a2a2a" stroke-width="0.8"/></svg>
<span style="left:764.20px;top:568.09px;font-size:11px;line-height:11px;color:#3a96f0;letter-spacing:-0.239px;">+0.0</span>
<div style="left:804px;top:565px;width:2px;height:15px;background:#0f0f0f;"></div>
<svg style="left:817px;top:567px;" width="14" height="11" viewBox="0 0 14 11"><path d="M0.4 2.4 H3.6 L4.8 0.6 H9.2 L10.4 2.4 H13.6 V10.6 H0.4 Z" fill="#b4b4b4"/><circle cx="7" cy="6.2" r="2.6" fill="#1e1e1e"/><circle cx="7" cy="6.2" r="1.4" fill="#b4b4b4"/></svg>
<svg style="left:840px;top:564px;" width="16" height="15" viewBox="0 0 16 15"><path d="M7.2 1.8 H9.2 L9.8 0.9 H12.6 L13.2 1.8 H15.2 V6.6 H7.2 Z" fill="#6e6e6e"/><circle cx="11.2" cy="4.1" r="1.5" fill="#1e1e1e"/><circle cx="11.2" cy="4.1" r="0.7" fill="#6e6e6e"/><path d="M0.1 9.6 C2.6 4.4 10.4 4.4 12.9 9.6 C10.4 14.4 2.6 14.4 0.1 9.6 Z" fill="#6e6e6e" stroke="#1e1e1e" stroke-width="0.7"/><circle cx="6.5" cy="9.4" r="2.7" fill="#2a2a2a"/><circle cx="6.5" cy="9.4" r="1.5" fill="#5a5a5a"/></svg>
<div style="left:866px;top:565px;width:2px;height:15px;background:#0f0f0f;"></div>
<div style="left:877px;top:563.5px;width:69px;height:18px;background:#101010;border:1px solid #2e2e2e;border-radius:4px;box-sizing:border-box;"></div>
<span style="left:885.00px;top:568.09px;font-size:11px;line-height:11px;color:#cdcdcd;">0;00;00;00</span>
<div style="left:955px;top:565px;width:2px;height:15px;background:#0f0f0f;"></div>
<div style="left:1px;top:588px;width:1577px;height:251px;background:#1e1e1e;"></div>
<div style="left:1px;top:588px;width:1577px;height:1px;background:#2d8ceb;"></div>
<div style="left:1px;top:588px;width:1px;height:251px;background:#2d8ceb;"></div>
<svg style="left:12px;top:598px;" width="6" height="6" viewBox="0 0 6 6"><path d="M0.6 0.6 L5 5 M5 0.6 L0.6 5" stroke="#707070" stroke-width="1.3"/></svg>
<div style="left:27px;top:594px;width:10px;height:10px;background:#b5a17f;"></div>
<span style="left:48.20px;top:594.89px;font-size:11px;line-height:11px;color:#e8e8e8;letter-spacing:-0.103px;">Comp 1</span>
<div style="left:142px;top:594px;width:10px;height:10px;background:#b5a17f;"></div>
<span style="left:163.20px;top:594.89px;font-size:11px;line-height:11px;color:#cccccc;letter-spacing:-0.391px;">shape 1</span>
<div style="left:256px;top:594px;width:10px;height:10px;background:#b5a17f;"></div>
<span style="left:277.20px;top:594.89px;font-size:11px;line-height:11px;color:#cccccc;letter-spacing:-0.308px;">shape 2</span>
<div style="left:370px;top:594px;width:10px;height:10px;background:#b5a17f;"></div>
<span style="left:391.20px;top:594.89px;font-size:11px;line-height:11px;color:#cccccc;letter-spacing:-0.308px;">shape 3</span>
<div style="left:484px;top:594px;width:10px;height:10px;background:#b5a17f;"></div>
<span style="left:505.20px;top:594.89px;font-size:11px;line-height:11px;color:#cccccc;letter-spacing:-0.308px;">shape 4</span>
<div style="left:598px;top:594px;width:10px;height:10px;background:#b5a17f;"></div>
<span style="left:619.20px;top:594.89px;font-size:11px;line-height:11px;color:#cccccc;letter-spacing:-0.308px;">shape 5</span>
<div style="left:712px;top:594px;width:10px;height:10px;background:#b5a17f;"></div>
<span style="left:733.20px;top:594.89px;font-size:11px;line-height:11px;color:#cccccc;letter-spacing:-0.426px;">ascii</span>
<svg style="left:97px;top:596.4px;" width="9" height="9" viewBox="0 0 9 9"><path d="M0 1 H8 M0 4.4 H8 M0 7.8 H8" stroke="#c0c0c0" stroke-width="1.1"/></svg>
<div style="left:12px;top:610px;width:93px;height:1px;background:#e0e0e0;"></div>
<span style="left:810.00px;top:594.89px;font-size:11px;line-height:11px;color:#cccccc;letter-spacing:-0.151px;">Render Queue</span>
<span style="left:13.80px;top:615.36px;font-size:15.4px;line-height:15.4px;color:#3292ee;letter-spacing:-0.326px;font-weight:700;">0;00;00;00</span>
<span style="left:12.00px;top:634.00px;font-size:9.8px;line-height:9.8px;color:#1c66be;letter-spacing:0.024px;">00000 (29.97 fps)</span>
<div style="left:99.5px;top:619.6px;width:300px;height:19.4px;background:#0e0e0e;border:1px solid #2c2c2c;border-radius:4px;box-sizing:border-box;"></div>
<svg style="left:106px;top:623.5px;" width="17" height="12" viewBox="0 0 17 12"><circle cx="4.6" cy="4.6" r="3.4" fill="none" stroke="#a0a0a0" stroke-width="1.2"/><path d="M7 7.2 L10.2 10.6" stroke="#a0a0a0" stroke-width="1.3" fill="none"/><path d="M11 5.6 L13 7.6 L15.2 5.4" stroke="#a0a0a0" stroke-width="1.1" fill="none"/></svg>
<svg style="left:411px;top:622px;" width="19" height="16" viewBox="0 0 19 16"><rect x="2.8" y="2.9" width="4.1" height="2.7" rx="1" fill="#b8b8b8"/><rect x="11.9" y="2.9" width="4.2" height="2.7" rx="0.8" fill="#b8b8b8"/><rect x="11.9" y="7.9" width="4.2" height="2.8" rx="0.8" fill="#b8b8b8"/><path d="M1.1 4.25 H12 M9.5 4.25 V9.3 H12" stroke="#b8b8b8" stroke-width="1" fill="none"/><path d="M13.8 12.2 H17.9 L15.85 14.8 Z" fill="#b8b8b8"/></svg>
<svg style="left:436px;top:622px;" width="17" height="15" viewBox="0 0 17 15"><rect x="0.2" y="8.9" width="15.8" height="4.9" fill="#4a4a4a"/><path d="M4.6 6.6 C4.6 0.4 12.4 0.4 12.4 6.6 Z" fill="#b8b8b8"/><ellipse cx="6.7" cy="4.9" rx="1.1" ry="1.2" fill="#1e1e1e"/><ellipse cx="10.3" cy="4.9" rx="1.1" ry="1.2" fill="#1e1e1e"/><path d="M1 7 Q8.5 5.6 16 7" stroke="#b8b8b8" stroke-width="1.5" fill="none"/><rect x="7.4" y="4" width="2.2" height="8.4" rx="1" fill="#b8b8b8"/></svg>
<svg style="left:460.8px;top:622.7px;" width="14.40" height="14.40" viewBox="0 0 14.4 14.4"><path d="M0.2 3.4 H3.4 V11.8 H9.8 V14.2 H0.2 Z" fill="#b0b0b0"/><rect x="0.9" y="4.15" width="0.9" height="0.9" fill="#1e1e1e"/><rect x="0.9" y="6.20" width="0.9" height="0.9" fill="#1e1e1e"/><rect x="0.9" y="8.25" width="0.9" height="0.9" fill="#1e1e1e"/><rect x="0.9" y="10.30" width="0.9" height="0.9" fill="#1e1e1e"/><rect x="0.9" y="12.35" width="0.9" height="0.9" fill="#1e1e1e"/><rect x="2.6" y="13" width="0.9" height="0.7" fill="#1e1e1e"/><rect x="5" y="13" width="0.9" height="0.7" fill="#1e1e1e"/><rect x="7.4" y="13" width="0.9" height="0.7" fill="#1e1e1e"/><rect x="4.3" y="0.3" width="9.8" height="10.8" fill="#b0b0b0"/><rect x="5.1" y="1.05" width="0.9" height="0.9" fill="#1e1e1e"/><rect x="12.3" y="1.05" width="0.9" height="0.9" fill="#1e1e1e"/><rect x="5.1" y="3.10" width="0.9" height="0.9" fill="#1e1e1e"/><rect x="12.3" y="3.10" width="0.9" height="0.9" fill="#1e1e1e"/><rect x="5.1" y="5.15" width="0.9" height="0.9" fill="#1e1e1e"/><rect x="12.3" y="5.15" width="0.9" height="0.9" fill="#1e1e1e"/><rect x="5.1" y="7.20" width="0.9" height="0.9" fill="#1e1e1e"/><rect x="12.3" y="7.20" width="0.9" height="0.9" fill="#1e1e1e"/><rect x="5.1" y="9.25" width="0.9" height="0.9" fill="#1e1e1e"/><rect x="12.3" y="9.25" width="0.9" height="0.9" fill="#1e1e1e"/><rect x="7.4" y="5.1" width="3.6" height="1" fill="#1e1e1e"/></svg>
<svg style="left:484.6px;top:622.4px;" width="15.00" height="15.00" viewBox="0 0 15 15"><circle cx="5.2" cy="9.6" r="4.5" fill="#1e1e1e" stroke="#b0b0b0" stroke-width="1"/><circle cx="6.6" cy="8.3" r="4.5" fill="#1e1e1e" stroke="#b0b0b0" stroke-width="1"/><circle cx="8" cy="7" r="4.5" fill="#1e1e1e" stroke="#b0b0b0" stroke-width="1"/><circle cx="9.4" cy="5.4" r="4.6" fill="#4e4e4e" stroke="#b0b0b0" stroke-width="1.1"/></svg>
<svg style="left:505.5px;top:619.5px;" width="19" height="18" viewBox="0 0 19 18"><rect x="3.5" y="4.5" width="13.7" height="11.6" fill="none" stroke="#b8b8b8" stroke-width="1.2"/><path d="M5.2 7 C10.4 7 9.4 13.7 15.4 13.7" fill="none" stroke="#b8b8b8" stroke-width="1.1"/><path d="M8.8 2.2 V4.4 M11.5 2.2 V4.4 M14.3 2.2 V4.4 M1.8 6.6 H3.4 M1.8 10.5 H3.4 M1.8 14.4 H3.4" stroke="#b8b8b8" stroke-width="1.1"/></svg>
<div style="left:2px;top:647px;width:536px;height:1px;background:#121212;"></div>
<svg style="left:7.6px;top:653.6px;" width="11.4" height="8" viewBox="0 0 11.4 8"><path d="M0.5 4 C2.4 0.4 9 0.4 10.9 4 C9 7.6 2.4 7.6 0.5 4 Z" fill="none" stroke="#c0c0c0" stroke-width="1.2"/><circle cx="5.7" cy="4" r="2.1" fill="#c0c0c0"/></svg>
<svg style="left:22px;top:652px;" width="13" height="12" viewBox="0 0 13 12"><path d="M0.4 3.8 H2.6 L6 0.6 V11.4 L2.6 8.2 H0.4 Z" fill="#c0c0c0"/><path d="M7.6 3.6 C8.8 4.8 8.8 7.2 7.6 8.4" stroke="#c0c0c0" stroke-width="1.1" fill="none"/><path d="M8.8 1.4 C11.8 3.6 11.8 8.4 8.8 10.6" stroke="#c0c0c0" stroke-width="1.2" fill="none"/></svg>
<svg style="left:38.5px;top:653.4px;" width="9" height="9" viewBox="0 0 9 9"><circle cx="4.5" cy="4.5" r="3.7" fill="#b0b0b0"/></svg>
<svg style="left:52.4px;top:650.8px;" width="11" height="12" viewBox="0 0 11 12"><path d="M2.8 5.2 V3.4 C2.8 0.2 8.2 0.2 8.2 3.4 V5.2" stroke="#a6a6a6" stroke-width="1.5" fill="none"/><rect x="0.8" y="5" width="9.4" height="6.4" fill="#a6a6a6"/><rect x="5" y="6.8" width="1.1" height="2.6" fill="#1e1e1e"/></svg>
<div style="left:68px;top:652px;width:2px;height:12px;background:#101010;"></div>
<div style="left:100px;top:652px;width:2px;height:12px;background:#101010;"></div>
<div style="left:133px;top:652px;width:2px;height:12px;background:#101010;"></div>
<div style="left:263px;top:652px;width:2px;height:12px;background:#101010;"></div>
<div style="left:380px;top:652px;width:2px;height:12px;background:#101010;"></div>
<div style="left:520px;top:652px;width:2px;height:12px;background:#101010;"></div>
<svg style="left:83px;top:651px;" width="13.299999999999999" height="13.299999999999999" viewBox="0 0 14 14"><path d="M0.8 1.2 L6.2 0.6 L12.8 7.6 L7.6 13.2 L0.8 6.4 Z" fill="#9a9a9a"/><circle cx="3.4" cy="3.6" r="1.1" fill="#1e1e1e"/></svg>
<span style="left:107.00px;top:653.97px;font-size:9.6px;line-height:9.6px;color:#b2b2b2;letter-spacing:-0.339px;">#</span>
<span style="left:140.00px;top:653.97px;font-size:9.6px;line-height:9.6px;color:#b2b2b2;letter-spacing:-0.409px;">Source Name</span>
<span style="left:270.00px;top:653.97px;font-size:9.6px;line-height:9.6px;color:#b2b2b2;letter-spacing:-0.219px;">Parent &amp; Link</span>
<svg style="left:386px;top:651.5px;" width="13.4" height="11" viewBox="0 0 13.4 11"><path d="M2.1 6.4 C1.6 -1.5 12.1 -1.5 11.6 6.4 Z" fill="#a6a6a6"/><circle cx="5" cy="3.9" r="1.05" fill="#1e1e1e"/><circle cx="8.7" cy="3.9" r="1.05" fill="#1e1e1e"/><rect x="0.3" y="7.6" width="12.8" height="1.15" fill="#a6a6a6"/><rect x="5.85" y="4.6" width="2.1" height="5.7" rx="0.9" fill="#a6a6a6"/></svg>
<svg style="left:402.6px;top:651.9px;" width="10.8" height="10.8" viewBox="0 0 10.8 10.8"><circle cx="5.4" cy="5.4" r="1.9" fill="none" stroke="#a6a6a6" stroke-width="1.3"/><path d="M8.50 5.40 L10.60 5.40 M7.59 7.59 L9.08 9.08 M5.40 8.50 L5.40 10.60 M3.21 7.59 L1.72 9.08 M2.30 5.40 L0.20 5.40 M3.21 3.21 L1.72 1.72 M5.40 2.30 L5.40 0.20 M7.59 3.21 L9.08 1.72 " stroke="#a6a6a6" stroke-width="1.3"/></svg>
<svg style="left:417px;top:651.7px;" width="12" height="12" viewBox="0 0 12 12"><circle cx="1.20" cy="1.20" r="1.1" fill="#a6a6a6"/><circle cx="3.40" cy="3.35" r="1.1" fill="#a6a6a6"/><circle cx="5.60" cy="5.50" r="1.1" fill="#a6a6a6"/><circle cx="7.80" cy="7.65" r="1.1" fill="#a6a6a6"/><circle cx="10.00" cy="9.80" r="1.1" fill="#a6a6a6"/></svg>
<span style="left:432.20000000000005px;top:649.24px;font-size:13.2px;line-height:13.2px;color:#a6a6a6;font-style:italic;font-weight:700;font-family:'Liberation Serif',serif;">f</span>
<span style="left:436.20000000000005px;top:652.37px;font-size:10.2px;line-height:10.2px;color:#a6a6a6;font-style:italic;transform:scaleX(1.3);transform-origin:0 0;">x</span>
<svg style="left:446px;top:652.3px;" width="12.24" height="12.24" viewBox="0 0 14.4 14.4"><path d="M0.2 3.4 H3.4 V11.8 H9.8 V14.2 H0.2 Z" fill="#a6a6a6"/><rect x="0.9" y="4.15" width="0.9" height="0.9" fill="#1e1e1e"/><rect x="0.9" y="6.20" width="0.9" height="0.9" fill="#1e1e1e"/><rect x="0.9" y="8.25" width="0.9" height="0.9" fill="#1e1e1e"/><rect x="0.9" y="10.30" width="0.9" height="0.9" fill="#1e1e1e"/><rect x="0.9" y="12.35" width="0.9" height="0.9" fill="#1e1e1e"/><rect x="2.6" y="13" width="0.9" height="0.7" fill="#1e1e1e"/><rect x="5" y="13" width="0.9" height="0.7" fill="#1e1e1e"/><rect x="7.4" y="13" width="0.9" height="0.7" fill="#1e1e1e"/><rect x="4.3" y="0.3" width="9.8" height="10.8" fill="#a6a6a6"/><rect x="5.1" y="1.05" width="0.9" height="0.9" fill="#1e1e1e"/><rect x="12.3" y="1.05" width="0.9" height="0.9" fill="#1e1e1e"/><rect x="5.1" y="3.10" width="0.9" height="0.9" fill="#1e1e1e"/><rect x="12.3" y="3.10" width="0.9" height="0.9" fill="#1e1e1e"/><rect x="5.1" y="5.15" width="0.9" height="0.9" fill="#1e1e1e"/><rect x="12.3" y="5.15" width="0.9" height="0.9" fill="#1e1e1e"/><rect x="5.1" y="7.20" width="0.9" height="0.9" fill="#1e1e1e"/><rect x="12.3" y="7.20" width="0.9" height="0.9" fill="#1e1e1e"/><rect x="5.1" y="9.25" width="0.9" height="0.9" fill="#1e1e1e"/><rect x="12.3" y="9.25" width="0.9" height="0.9" fill="#1e1e1e"/><rect x="7.4" y="5.1" width="3.6" height="1" fill="#1e1e1e"/></svg>
<svg style="left:460.6px;top:650.8px;" width="13.50" height="13.50" viewBox="0 0 15 15"><circle cx="5.2" cy="9.6" r="4.5" fill="#1e1e1e" stroke="#8e8e8e" stroke-width="1"/><circle cx="6.6" cy="8.3" r="4.5" fill="#1e1e1e" stroke="#8e8e8e" stroke-width="1"/><circle cx="8" cy="7" r="4.5" fill="#1e1e1e" stroke="#8e8e8e" stroke-width="1"/><circle cx="9.4" cy="5.4" r="4.6" fill="#5a5a5a" stroke="#8e8e8e" stroke-width="1.1"/></svg>
<svg style="left:477px;top:652px;" width="12" height="12" viewBox="0 0 12 12"><circle cx="6" cy="6" r="4.9" fill="none" stroke="#b4b4b4" stroke-width="1.2"/><path d="M9.5 2.5 A4.9 4.9 0 0 1 2.5 9.5 Z" fill="#b4b4b4"/></svg>
<svg style="left:492.8px;top:652.6px;" width="10.4" height="9.4" viewBox="0 0 10.4 9.4"><path d="M5.2 0.6 L9.7 2.6 V6.9 L5.2 8.9 L0.7 6.9 V2.6 Z" fill="none" stroke="#a6a6a6" stroke-width="1.1"/><path d="M0.7 2.6 L5.2 4.7 L9.7 2.6 M5.2 4.7 V8.9" fill="none" stroke="#a6a6a6" stroke-width="1.1"/></svg>
<div style="left:2px;top:666px;width:535px;height:1px;background:#181818;"></div>
<div style="left:2px;top:667px;width:535px;height:16px;background:#323232;"></div>
<div style="left:6.3px;top:669px;width:12.1px;height:11px;background:#0e0e0e;border-radius:2px;"></div>
<div style="left:21.4px;top:669px;width:12.1px;height:11px;background:#0e0e0e;border-radius:2px;"></div>
<svg style="left:21.099999999999998px;top:668.6px;" width="13" height="12" viewBox="0 0 13 12"><path d="M0.4 3.8 H2.6 L6 0.6 V11.4 L2.6 8.2 H0.4 Z" fill="#c0c0c0"/><path d="M7.6 3.6 C8.8 4.8 8.8 7.2 7.6 8.4" stroke="#c0c0c0" stroke-width="1.1" fill="none"/><path d="M8.8 1.4 C11.8 3.6 11.8 8.4 8.8 10.6" stroke="#c0c0c0" stroke-width="1.2" fill="none"/></svg>
<div style="left:36.5px;top:669px;width:12.1px;height:11px;background:#0e0e0e;border-radius:2px;"></div>
<div style="left:51.599999999999994px;top:669px;width:12.1px;height:11px;background:#0e0e0e;border-radius:2px;"></div>
<svg style="left:74.3px;top:671.2px;" width="6.6" height="8.6" viewBox="0 0 6.6 8.6"><path d="M1 1 L5.3 4.3 L1 7.6" stroke="#c8c8c8" stroke-width="1.6" fill="none"/></svg>
<div style="left:87px;top:669px;width:12px;height:12px;background:#a5cbc7;"></div>
<span style="left:108.00px;top:669.69px;font-size:11px;line-height:11px;color:#cdcdcd;">1</span>
<svg style="left:139px;top:669.5px;" width="9.02" height="11.479999999999999" viewBox="0 0 11 14"><defs><linearGradient id="rg" x1="0" y1="0" x2="0" y2="1"><stop offset="0" stop-color="#e8833a"/><stop offset="0.55" stop-color="#b0508a"/><stop offset="1" stop-color="#6a3fb0"/></linearGradient></defs><path d="M0.4 0.3 H8.2 L10.7 2.8 V13.7 H0.4 Z" fill="#fbfbfb"/><path d="M8.2 0.3 V2.8 H10.7 Z" fill="#bdbdbd"/><circle cx="5.3" cy="7.2" r="3.5" fill="url(#rg)"/><circle cx="5.3" cy="7.2" r="2.6" fill="#2a2230"/><path d="M4.3 5.5 L7.0 7.2 L4.3 8.9 Z" fill="#fff"/></svg>
<span style="left:156.00px;top:669.69px;font-size:11px;line-height:11px;color:#cdcdcd;letter-spacing:-0.164px;">Abstrac...utube).mp4</span>
<svg style="left:269px;top:669.2px;" width="13" height="12" viewBox="0 0 13 12"><path d="M10.30 1.24 L10.79 2.06 L11.14 2.93 L11.34 3.84 L11.40 4.76 L11.31 5.66 L11.08 6.53 L10.72 7.33 L10.24 8.06 L9.65 8.70 L8.99 9.22 L8.25 9.63 L7.48 9.91 L6.68 10.06 L5.87 10.08 L5.09 9.97 L4.34 9.74 L3.66 9.40 L3.04 8.96 L2.51 8.44 L2.08 7.84 L1.75 7.20 L1.54 6.52 L1.44 5.83 L1.45 5.14 L1.57 4.48 L1.79 3.85 L2.10 3.28 L2.50 2.77 L2.96 2.34 L3.47 2.00 L4.03 1.75 L4.60 1.60 L5.18 1.54 L5.75 1.58 L6.30 1.70 L6.81 1.91 L7.27 2.19 L7.66 2.53 L7.99 2.93 L8.25 3.36 L8.43 3.82 L8.53 4.29 L8.55 4.76 L8.49 5.21 L8.37 5.64 L8.18 6.03 L7.94 6.38 L7.65 6.67 L7.33 6.91 L6.98 7.08 L6.62 7.19 L6.26 7.24 L5.90 7.23 L5.57 7.16 L5.26 7.04 L4.98 6.88 L4.74 6.68 L4.55 6.45 L4.41 6.21 L4.31 5.95 L4.26 5.69 L4.26 5.44 L4.29 5.20 L4.37 4.98 L4.47 4.79 L4.61 4.63 L4.76 4.50 L4.92 4.40 L5.09 4.35 L5.25 4.32" fill="none" stroke="#7a7a7a" stroke-width="1.5" stroke-linecap="round" stroke-linejoin="round"/></svg>
<div style="left:288px;top:668px;width:89px;height:14px;background:#0e0e0e;border-radius:3px;"></div>
<span style="left:296.50px;top:669.69px;font-size:11px;line-height:11px;color:#cdcdcd;letter-spacing:0.067px;">None</span>
<svg style="left:359px;top:671.9px;" width="10" height="7.4" viewBox="0 0 10 7.4"><path d="M0.6 0.7 L5.0 6.1000000000000005 L9.4 0.7" stroke="#d8d8d8" stroke-width="1.8" fill="none"/></svg>
<div style="left:386.3px;top:668.6px;width:12.4px;height:11.6px;background:#0e0e0e;border-radius:2px;"></div>
<svg style="left:386px;top:668.6px;" width="13.4" height="11" viewBox="0 0 13.4 11"><path d="M2.1 6.4 C1.6 -1.5 12.1 -1.5 11.6 6.4 Z" fill="#d0d0d0"/><circle cx="5" cy="3.9" r="1.05" fill="#0e0e0e"/><circle cx="8.7" cy="3.9" r="1.05" fill="#0e0e0e"/><rect x="0.3" y="7.6" width="12.8" height="1.15" fill="#d0d0d0"/><rect x="5.85" y="4.6" width="2.1" height="5.7" rx="0.9" fill="#d0d0d0"/></svg>
<div style="left:416.7px;top:668.6px;width:11.7px;height:11.6px;background:#0e0e0e;border-radius:2px;"></div>
<svg style="left:416.7px;top:668.6px;" width="12" height="12" viewBox="0 0 12 12"><path d="M0.9 10.9 L10.9 1.2" stroke="#c0c0c0" stroke-width="1.5"/></svg>
<div style="left:446.4px;top:669px;width:11.9px;height:11.4px;background:#0e0e0e;border-radius:2px;"></div>
<div style="left:461.34999999999997px;top:669px;width:11.9px;height:11.4px;background:#0e0e0e;border-radius:2px;"></div>
<div style="left:476.29999999999995px;top:669px;width:11.9px;height:11.4px;background:#0e0e0e;border-radius:2px;"></div>
<div style="left:491.25px;top:669px;width:11.9px;height:11.4px;background:#0e0e0e;border-radius:2px;"></div>
<div style="left:2px;top:683px;width:535px;height:1px;background:#181818;"></div>
<div style="left:2px;top:684px;width:535px;height:16px;background:#323232;"></div>
<div style="left:6.3px;top:686px;width:12.1px;height:11px;background:#0e0e0e;border-radius:2px;"></div>
<svg style="left:6.5px;top:687.6px;" width="11.4" height="8" viewBox="0 0 11.4 8"><path d="M0.5 4 C2.4 0.4 9 0.4 10.9 4 C9 7.6 2.4 7.6 0.5 4 Z" fill="none" stroke="#e0e0e0" stroke-width="1.2"/><circle cx="5.7" cy="4" r="2.1" fill="#e0e0e0"/></svg>
<div style="left:36.5px;top:686px;width:12.1px;height:11px;background:#0e0e0e;border-radius:2px;"></div>
<div style="left:51.599999999999994px;top:686px;width:12.1px;height:11px;background:#0e0e0e;border-radius:2px;"></div>
<svg style="left:74.3px;top:688.2px;" width="6.6" height="8.6" viewBox="0 0 6.6 8.6"><path d="M1 1 L5.3 4.3 L1 7.6" stroke="#c8c8c8" stroke-width="1.6" fill="none"/></svg>
<div style="left:87px;top:686px;width:12px;height:12px;background:#a5cbc7;"></div>
<span style="left:108.00px;top:686.69px;font-size:11px;line-height:11px;color:#cdcdcd;">2</span>
<svg style="left:139px;top:686.5px;" width="9.02" height="11.479999999999999" viewBox="0 0 11 14"><defs><linearGradient id="rg" x1="0" y1="0" x2="0" y2="1"><stop offset="0" stop-color="#e8833a"/><stop offset="0.55" stop-color="#b0508a"/><stop offset="1" stop-color="#6a3fb0"/></linearGradient></defs><path d="M0.4 0.3 H8.2 L10.7 2.8 V13.7 H0.4 Z" fill="#fbfbfb"/><path d="M8.2 0.3 V2.8 H10.7 Z" fill="#bdbdbd"/><circle cx="5.3" cy="7.2" r="3.5" fill="url(#rg)"/><circle cx="5.3" cy="7.2" r="2.6" fill="#2a2230"/><path d="M4.3 5.5 L7.0 7.2 L4.3 8.9 Z" fill="#fff"/></svg>
<span style="left:156.00px;top:686.69px;font-size:11px;line-height:11px;color:#cdcdcd;letter-spacing:-0.139px;">leaves.mp4</span>
<svg style="left:269px;top:686.2px;" width="13" height="12" viewBox="0 0 13 12"><path d="M10.30 1.24 L10.79 2.06 L11.14 2.93 L11.34 3.84 L11.40 4.76 L11.31 5.66 L11.08 6.53 L10.72 7.33 L10.24 8.06 L9.65 8.70 L8.99 9.22 L8.25 9.63 L7.48 9.91 L6.68 10.06 L5.87 10.08 L5.09 9.97 L4.34 9.74 L3.66 9.40 L3.04 8.96 L2.51 8.44 L2.08 7.84 L1.75 7.20 L1.54 6.52 L1.44 5.83 L1.45 5.14 L1.57 4.48 L1.79 3.85 L2.10 3.28 L2.50 2.77 L2.96 2.34 L3.47 2.00 L4.03 1.75 L4.60 1.60 L5.18 1.54 L5.75 1.58 L6.30 1.70 L6.81 1.91 L7.27 2.19 L7.66 2.53 L7.99 2.93 L8.25 3.36 L8.43 3.82 L8.53 4.29 L8.55 4.76 L8.49 5.21 L8.37 5.64 L8.18 6.03 L7.94 6.38 L7.65 6.67 L7.33 6.91 L6.98 7.08 L6.62 7.19 L6.26 7.24 L5.90 7.23 L5.57 7.16 L5.26 7.04 L4.98 6.88 L4.74 6.68 L4.55 6.45 L4.41 6.21 L4.31 5.95 L4.26 5.69 L4.26 5.44 L4.29 5.20 L4.37 4.98 L4.47 4.79 L4.61 4.63 L4.76 4.50 L4.92 4.40 L5.09 4.35 L5.25 4.32" fill="none" stroke="#7a7a7a" stroke-width="1.5" stroke-linecap="round" stroke-linejoin="round"/></svg>
<div style="left:288px;top:685px;width:89px;height:14px;background:#0e0e0e;border-radius:3px;"></div>
<span style="left:296.50px;top:686.69px;font-size:11px;line-height:11px;color:#cdcdcd;letter-spacing:0.067px;">None</span>
<svg style="left:359px;top:688.9px;" width="10" height="7.4" viewBox="0 0 10 7.4"><path d="M0.6 0.7 L5.0 6.1000000000000005 L9.4 0.7" stroke="#d8d8d8" stroke-width="1.8" fill="none"/></svg>
<div style="left:386.3px;top:685.6px;width:12.4px;height:11.6px;background:#0e0e0e;border-radius:2px;"></div>
<svg style="left:386px;top:685.6px;" width="13.4" height="11" viewBox="0 0 13.4 11"><path d="M2.1 6.4 C1.6 -1.5 12.1 -1.5 11.6 6.4 Z" fill="#d0d0d0"/><circle cx="5" cy="3.9" r="1.05" fill="#0e0e0e"/><circle cx="8.7" cy="3.9" r="1.05" fill="#0e0e0e"/><rect x="0.3" y="7.6" width="12.8" height="1.15" fill="#d0d0d0"/><rect x="5.85" y="4.6" width="2.1" height="5.7" rx="0.9" fill="#d0d0d0"/></svg>
<div style="left:416.7px;top:685.6px;width:11.7px;height:11.6px;background:#0e0e0e;border-radius:2px;"></div>
<svg style="left:416.7px;top:685.6px;" width="12" height="12" viewBox="0 0 12 12"><path d="M0.9 10.9 L10.9 1.2" stroke="#c0c0c0" stroke-width="1.5"/></svg>
<div style="left:431.4px;top:685.6px;width:12.2px;height:11.6px;background:#0e0e0e;border-radius:2px;"></div>
<span style="left:432.20000000000005px;top:683.64px;font-size:13.2px;line-height:13.2px;color:#d0d0d0;font-style:italic;font-weight:700;font-family:'Liberation Serif',serif;">f</span>
<span style="left:436.20000000000005px;top:686.77px;font-size:10.2px;line-height:10.2px;color:#d0d0d0;font-style:italic;transform:scaleX(1.3);transform-origin:0 0;">x</span>
<div style="left:446.4px;top:686px;width:11.9px;height:11.4px;background:#0e0e0e;border-radius:2px;"></div>
<div style="left:461.34999999999997px;top:686px;width:11.9px;height:11.4px;background:#0e0e0e;border-radius:2px;"></div>
<div style="left:476.29999999999995px;top:686px;width:11.9px;height:11.4px;background:#0e0e0e;border-radius:2px;"></div>
<div style="left:491.25px;top:686px;width:11.9px;height:11.4px;background:#0e0e0e;border-radius:2px;"></div>
<div style="left:2px;top:700px;width:535px;height:1px;background:#181818;"></div>
<div style="left:2px;top:701px;width:535px;height:16px;background:#323232;"></div>
<div style="left:6.3px;top:703px;width:12.1px;height:11px;background:#0e0e0e;border-radius:2px;"></div>
<div style="left:21.4px;top:703px;width:12.1px;height:11px;background:#0e0e0e;border-radius:2px;"></div>
<div style="left:51.599999999999994px;top:703px;width:12.1px;height:11px;background:#0e0e0e;border-radius:2px;"></div>
<svg style="left:74.3px;top:705.2px;" width="6.6" height="8.6" viewBox="0 0 6.6 8.6"><path d="M1 1 L5.3 4.3 L1 7.6" stroke="#c8c8c8" stroke-width="1.6" fill="none"/></svg>
<div style="left:87px;top:703px;width:12px;height:12px;background:#a5cbc7;"></div>
<span style="left:108.00px;top:703.69px;font-size:11px;line-height:11px;color:#cdcdcd;">3</span>
<svg style="left:139px;top:703.5px;" width="9.02" height="11.479999999999999" viewBox="0 0 11 14"><defs><linearGradient id="rg" x1="0" y1="0" x2="0" y2="1"><stop offset="0" stop-color="#e8833a"/><stop offset="0.55" stop-color="#b0508a"/><stop offset="1" stop-color="#6a3fb0"/></linearGradient></defs><path d="M0.4 0.3 H8.2 L10.7 2.8 V13.7 H0.4 Z" fill="#fbfbfb"/><path d="M8.2 0.3 V2.8 H10.7 Z" fill="#bdbdbd"/><circle cx="5.3" cy="7.2" r="3.5" fill="url(#rg)"/><circle cx="5.3" cy="7.2" r="2.6" fill="#2a2230"/><path d="M4.3 5.5 L7.0 7.2 L4.3 8.9 Z" fill="#fff"/></svg>
<span style="left:156.00px;top:703.69px;font-size:11px;line-height:11px;color:#cdcdcd;letter-spacing:-0.025px;">2D Tetr...utube).mp4</span>
<svg style="left:269px;top:703.2px;" width="13" height="12" viewBox="0 0 13 12"><path d="M10.30 1.24 L10.79 2.06 L11.14 2.93 L11.34 3.84 L11.40 4.76 L11.31 5.66 L11.08 6.53 L10.72 7.33 L10.24 8.06 L9.65 8.70 L8.99 9.22 L8.25 9.63 L7.48 9.91 L6.68 10.06 L5.87 10.08 L5.09 9.97 L4.34 9.74 L3.66 9.40 L3.04 8.96 L2.51 8.44 L2.08 7.84 L1.75 7.20 L1.54 6.52 L1.44 5.83 L1.45 5.14 L1.57 4.48 L1.79 3.85 L2.10 3.28 L2.50 2.77 L2.96 2.34 L3.47 2.00 L4.03 1.75 L4.60 1.60 L5.18 1.54 L5.75 1.58 L6.30 1.70 L6.81 1.91 L7.27 2.19 L7.66 2.53 L7.99 2.93 L8.25 3.36 L8.43 3.82 L8.53 4.29 L8.55 4.76 L8.49 5.21 L8.37 5.64 L8.18 6.03 L7.94 6.38 L7.65 6.67 L7.33 6.91 L6.98 7.08 L6.62 7.19 L6.26 7.24 L5.90 7.23 L5.57 7.16 L5.26 7.04 L4.98 6.88 L4.74 6.68 L4.55 6.45 L4.41 6.21 L4.31 5.95 L4.26 5.69 L4.26 5.44 L4.29 5.20 L4.37 4.98 L4.47 4.79 L4.61 4.63 L4.76 4.50 L4.92 4.40 L5.09 4.35 L5.25 4.32" fill="none" stroke="#7a7a7a" stroke-width="1.5" stroke-linecap="round" stroke-linejoin="round"/></svg>
<div style="left:288px;top:702px;width:89px;height:14px;background:#0e0e0e;border-radius:3px;"></div>
<span style="left:296.50px;top:703.69px;font-size:11px;line-height:11px;color:#cdcdcd;letter-spacing:0.067px;">None</span>
<svg style="left:359px;top:705.9px;" width="10" height="7.4" viewBox="0 0 10 7.4"><path d="M0.6 0.7 L5.0 6.1000000000000005 L9.4 0.7" stroke="#d8d8d8" stroke-width="1.8" fill="none"/></svg>
<div style="left:386.3px;top:702.6px;width:12.4px;height:11.6px;background:#0e0e0e;border-radius:2px;"></div>
<svg style="left:386px;top:702.6px;" width="13.4" height="11" viewBox="0 0 13.4 11"><path d="M2.1 6.4 C1.6 -1.5 12.1 -1.5 11.6 6.4 Z" fill="#d0d0d0"/><circle cx="5" cy="3.9" r="1.05" fill="#0e0e0e"/><circle cx="8.7" cy="3.9" r="1.05" fill="#0e0e0e"/><rect x="0.3" y="7.6" width="12.8" height="1.15" fill="#d0d0d0"/><rect x="5.85" y="4.6" width="2.1" height="5.7" rx="0.9" fill="#d0d0d0"/></svg>
<div style="left:416.7px;top:702.6px;width:11.7px;height:11.6px;background:#0e0e0e;border-radius:2px;"></div>
<svg style="left:416.7px;top:702.6px;" width="12" height="12" viewBox="0 0 12 12"><path d="M0.9 10.9 L10.9 1.2" stroke="#c0c0c0" stroke-width="1.5"/></svg>
<div style="left:431.4px;top:702.6px;width:12.2px;height:11.6px;background:#0e0e0e;border-radius:2px;"></div>
<span style="left:432.20000000000005px;top:700.64px;font-size:13.2px;line-height:13.2px;color:#d0d0d0;font-style:italic;font-weight:700;font-family:'Liberation Serif',serif;">f</span>
<span style="left:436.20000000000005px;top:703.77px;font-size:10.2px;line-height:10.2px;color:#d0d0d0;font-style:italic;transform:scaleX(1.3);transform-origin:0 0;">x</span>
<div style="left:446.4px;top:703px;width:11.9px;height:11.4px;background:#0e0e0e;border-radius:2px;"></div>
<div style="left:461.34999999999997px;top:703px;width:11.9px;height:11.4px;background:#0e0e0e;border-radius:2px;"></div>
<div style="left:476.29999999999995px;top:703px;width:11.9px;height:11.4px;background:#0e0e0e;border-radius:2px;"></div>
<div style="left:491.25px;top:703px;width:11.9px;height:11.4px;background:#0e0e0e;border-radius:2px;"></div>
<div style="left:2px;top:717px;width:535px;height:1px;background:#181818;"></div>
<div style="left:2px;top:718px;width:535px;height:16px;background:#323232;"></div>
<div style="left:6.3px;top:720px;width:12.1px;height:11px;background:#0e0e0e;border-radius:2px;"></div>
<div style="left:51.599999999999994px;top:720px;width:12.1px;height:11px;background:#0e0e0e;border-radius:2px;"></div>
<svg style="left:74.3px;top:722.2px;" width="6.6" height="8.6" viewBox="0 0 6.6 8.6"><path d="M1 1 L5.3 4.3 L1 7.6" stroke="#c8c8c8" stroke-width="1.6" fill="none"/></svg>
<div style="left:87px;top:720px;width:12px;height:12px;background:#a5cbc7;"></div>
<span style="left:108.00px;top:720.69px;font-size:11px;line-height:11px;color:#cdcdcd;">4</span>
<svg style="left:139px;top:720.5px;" width="9.02" height="11.479999999999999" viewBox="0 0 11 14"><defs><linearGradient id="rg" x1="0" y1="0" x2="0" y2="1"><stop offset="0" stop-color="#e8833a"/><stop offset="0.55" stop-color="#b0508a"/><stop offset="1" stop-color="#6a3fb0"/></linearGradient></defs><path d="M0.4 0.3 H8.2 L10.7 2.8 V13.7 H0.4 Z" fill="#fbfbfb"/><path d="M8.2 0.3 V2.8 H10.7 Z" fill="#bdbdbd"/><circle cx="5.3" cy="7.2" r="3.5" fill="url(#rg)"/><circle cx="5.3" cy="7.2" r="2.6" fill="#2a2230"/><path d="M4.3 5.5 L7.0 7.2 L4.3 8.9 Z" fill="#fff"/></svg>
<span style="left:156.00px;top:720.69px;font-size:11px;line-height:11px;color:#cdcdcd;">videoplayback3.mp4</span>
<svg style="left:269px;top:720.2px;" width="13" height="12" viewBox="0 0 13 12"><path d="M10.30 1.24 L10.79 2.06 L11.14 2.93 L11.34 3.84 L11.40 4.76 L11.31 5.66 L11.08 6.53 L10.72 7.33 L10.24 8.06 L9.65 8.70 L8.99 9.22 L8.25 9.63 L7.48 9.91 L6.68 10.06 L5.87 10.08 L5.09 9.97 L4.34 9.74 L3.66 9.40 L3.04 8.96 L2.51 8.44 L2.08 7.84 L1.75 7.20 L1.54 6.52 L1.44 5.83 L1.45 5.14 L1.57 4.48 L1.79 3.85 L2.10 3.28 L2.50 2.77 L2.96 2.34 L3.47 2.00 L4.03 1.75 L4.60 1.60 L5.18 1.54 L5.75 1.58 L6.30 1.70 L6.81 1.91 L7.27 2.19 L7.66 2.53 L7.99 2.93 L8.25 3.36 L8.43 3.82 L8.53 4.29 L8.55 4.76 L8.49 5.21 L8.37 5.64 L8.18 6.03 L7.94 6.38 L7.65 6.67 L7.33 6.91 L6.98 7.08 L6.62 7.19 L6.26 7.24 L5.90 7.23 L5.57 7.16 L5.26 7.04 L4.98 6.88 L4.74 6.68 L4.55 6.45 L4.41 6.21 L4.31 5.95 L4.26 5.69 L4.26 5.44 L4.29 5.20 L4.37 4.98 L4.47 4.79 L4.61 4.63 L4.76 4.50 L4.92 4.40 L5.09 4.35 L5.25 4.32" fill="none" stroke="#7a7a7a" stroke-width="1.5" stroke-linecap="round" stroke-linejoin="round"/></svg>
<div style="left:288px;top:719px;width:89px;height:14px;background:#0e0e0e;border-radius:3px;"></div>
<span style="left:296.50px;top:720.69px;font-size:11px;line-height:11px;color:#cdcdcd;letter-spacing:0.067px;">None</span>
<svg style="left:359px;top:722.9px;" width="10" height="7.4" viewBox="0 0 10 7.4"><path d="M0.6 0.7 L5.0 6.1000000000000005 L9.4 0.7" stroke="#d8d8d8" stroke-width="1.8" fill="none"/></svg>
<div style="left:386.3px;top:719.6px;width:12.4px;height:11.6px;background:#0e0e0e;border-radius:2px;"></div>
<svg style="left:386px;top:719.6px;" width="13.4" height="11" viewBox="0 0 13.4 11"><path d="M2.1 6.4 C1.6 -1.5 12.1 -1.5 11.6 6.4 Z" fill="#d0d0d0"/><circle cx="5" cy="3.9" r="1.05" fill="#0e0e0e"/><circle cx="8.7" cy="3.9" r="1.05" fill="#0e0e0e"/><rect x="0.3" y="7.6" width="12.8" height="1.15" fill="#d0d0d0"/><rect x="5.85" y="4.6" width="2.1" height="5.7" rx="0.9" fill="#d0d0d0"/></svg>
<div style="left:416.7px;top:719.6px;width:11.7px;height:11.6px;background:#0e0e0e;border-radius:2px;"></div>
<svg style="left:416.7px;top:719.6px;" width="12" height="12" viewBox="0 0 12 12"><path d="M0.9 10.9 L10.9 1.2" stroke="#c0c0c0" stroke-width="1.5"/></svg>
<div style="left:431.4px;top:719.6px;width:12.2px;height:11.6px;background:#0e0e0e;border-radius:2px;"></div>
<span style="left:432.20000000000005px;top:717.64px;font-size:13.2px;line-height:13.2px;color:#d0d0d0;font-style:italic;font-weight:700;font-family:'Liberation Serif',serif;">f</span>
<span style="left:436.20000000000005px;top:720.77px;font-size:10.2px;line-height:10.2px;color:#d0d0d0;font-style:italic;transform:scaleX(1.3);transform-origin:0 0;">x</span>
<div style="left:446.4px;top:720px;width:11.9px;height:11.4px;background:#0e0e0e;border-radius:2px;"></div>
<div style="left:461.34999999999997px;top:720px;width:11.9px;height:11.4px;background:#0e0e0e;border-radius:2px;"></div>
<div style="left:476.29999999999995px;top:720px;width:11.9px;height:11.4px;background:#0e0e0e;border-radius:2px;"></div>
<div style="left:491.25px;top:720px;width:11.9px;height:11.4px;background:#0e0e0e;border-radius:2px;"></div>
<div style="left:2px;top:734px;width:535px;height:1px;background:#181818;"></div>
<div style="left:2px;top:735px;width:535px;height:16px;background:#323232;"></div>
<div style="left:6.3px;top:737px;width:12.1px;height:11px;background:#0e0e0e;border-radius:2px;"></div>
<div style="left:51.599999999999994px;top:737px;width:12.1px;height:11px;background:#0e0e0e;border-radius:2px;"></div>
<svg style="left:74.3px;top:739.2px;" width="6.6" height="8.6" viewBox="0 0 6.6 8.6"><path d="M1 1 L5.3 4.3 L1 7.6" stroke="#c8c8c8" stroke-width="1.6" fill="none"/></svg>
<div style="left:87px;top:737px;width:12px;height:12px;background:#a5cbc7;"></div>
<span style="left:108.00px;top:737.69px;font-size:11px;line-height:11px;color:#cdcdcd;">5</span>
<svg style="left:139px;top:737.5px;" width="9.02" height="11.479999999999999" viewBox="0 0 11 14"><defs><linearGradient id="rg" x1="0" y1="0" x2="0" y2="1"><stop offset="0" stop-color="#e8833a"/><stop offset="0.55" stop-color="#b0508a"/><stop offset="1" stop-color="#6a3fb0"/></linearGradient></defs><path d="M0.4 0.3 H8.2 L10.7 2.8 V13.7 H0.4 Z" fill="#fbfbfb"/><path d="M8.2 0.3 V2.8 H10.7 Z" fill="#bdbdbd"/><circle cx="5.3" cy="7.2" r="3.5" fill="url(#rg)"/><circle cx="5.3" cy="7.2" r="2.6" fill="#2a2230"/><path d="M4.3 5.5 L7.0 7.2 L4.3 8.9 Z" fill="#fff"/></svg>
<span style="left:156.00px;top:737.69px;font-size:11px;line-height:11px;color:#cdcdcd;letter-spacing:-0.115px;">videopl...ck (2).mp4</span>
<svg style="left:269px;top:737.2px;" width="13" height="12" viewBox="0 0 13 12"><path d="M10.30 1.24 L10.79 2.06 L11.14 2.93 L11.34 3.84 L11.40 4.76 L11.31 5.66 L11.08 6.53 L10.72 7.33 L10.24 8.06 L9.65 8.70 L8.99 9.22 L8.25 9.63 L7.48 9.91 L6.68 10.06 L5.87 10.08 L5.09 9.97 L4.34 9.74 L3.66 9.40 L3.04 8.96 L2.51 8.44 L2.08 7.84 L1.75 7.20 L1.54 6.52 L1.44 5.83 L1.45 5.14 L1.57 4.48 L1.79 3.85 L2.10 3.28 L2.50 2.77 L2.96 2.34 L3.47 2.00 L4.03 1.75 L4.60 1.60 L5.18 1.54 L5.75 1.58 L6.30 1.70 L6.81 1.91 L7.27 2.19 L7.66 2.53 L7.99 2.93 L8.25 3.36 L8.43 3.82 L8.53 4.29 L8.55 4.76 L8.49 5.21 L8.37 5.64 L8.18 6.03 L7.94 6.38 L7.65 6.67 L7.33 6.91 L6.98 7.08 L6.62 7.19 L6.26 7.24 L5.90 7.23 L5.57 7.16 L5.26 7.04 L4.98 6.88 L4.74 6.68 L4.55 6.45 L4.41 6.21 L4.31 5.95 L4.26 5.69 L4.26 5.44 L4.29 5.20 L4.37 4.98 L4.47 4.79 L4.61 4.63 L4.76 4.50 L4.92 4.40 L5.09 4.35 L5.25 4.32" fill="none" stroke="#7a7a7a" stroke-width="1.5" stroke-linecap="round" stroke-linejoin="round"/></svg>
<div style="left:288px;top:736px;width:89px;height:14px;background:#0e0e0e;border-radius:3px;"></div>
<span style="left:296.50px;top:737.69px;font-size:11px;line-height:11px;color:#cdcdcd;letter-spacing:0.067px;">None</span>
<svg style="left:359px;top:739.9px;" width="10" height="7.4" viewBox="0 0 10 7.4"><path d="M0.6 0.7 L5.0 6.1000000000000005 L9.4 0.7" stroke="#d8d8d8" stroke-width="1.8" fill="none"/></svg>
<div style="left:386.3px;top:736.6px;width:12.4px;height:11.6px;background:#0e0e0e;border-radius:2px;"></div>
<svg style="left:386px;top:736.6px;" width="13.4" height="11" viewBox="0 0 13.4 11"><path d="M2.1 6.4 C1.6 -1.5 12.1 -1.5 11.6 6.4 Z" fill="#d0d0d0"/><circle cx="5" cy="3.9" r="1.05" fill="#0e0e0e"/><circle cx="8.7" cy="3.9" r="1.05" fill="#0e0e0e"/><rect x="0.3" y="7.6" width="12.8" height="1.15" fill="#d0d0d0"/><rect x="5.85" y="4.6" width="2.1" height="5.7" rx="0.9" fill="#d0d0d0"/></svg>
<div style="left:416.7px;top:736.6px;width:11.7px;height:11.6px;background:#0e0e0e;border-radius:2px;"></div>
<svg style="left:416.7px;top:736.6px;" width="12" height="12" viewBox="0 0 12 12"><path d="M0.9 10.9 L10.9 1.2" stroke="#c0c0c0" stroke-width="1.5"/></svg>
<div style="left:446.4px;top:737px;width:11.9px;height:11.4px;background:#0e0e0e;border-radius:2px;"></div>
<div style="left:461.34999999999997px;top:737px;width:11.9px;height:11.4px;background:#0e0e0e;border-radius:2px;"></div>
<div style="left:476.29999999999995px;top:737px;width:11.9px;height:11.4px;background:#0e0e0e;border-radius:2px;"></div>
<div style="left:491.25px;top:737px;width:11.9px;height:11.4px;background:#0e0e0e;border-radius:2px;"></div>
<div style="left:2px;top:751px;width:535px;height:1px;background:#181818;"></div>
<div style="left:2px;top:752px;width:535px;height:16px;background:#323232;"></div>
<div style="left:6.3px;top:754px;width:12.1px;height:11px;background:#0e0e0e;border-radius:2px;"></div>
<div style="left:51.599999999999994px;top:754px;width:12.1px;height:11px;background:#0e0e0e;border-radius:2px;"></div>
<svg style="left:74.3px;top:756.2px;" width="6.6" height="8.6" viewBox="0 0 6.6 8.6"><path d="M1 1 L5.3 4.3 L1 7.6" stroke="#c8c8c8" stroke-width="1.6" fill="none"/></svg>
<div style="left:87px;top:754px;width:12px;height:12px;background:#a5cbc7;"></div>
<span style="left:108.00px;top:754.69px;font-size:11px;line-height:11px;color:#cdcdcd;">6</span>
<svg style="left:139px;top:754.5px;" width="9.02" height="11.479999999999999" viewBox="0 0 11 14"><defs><linearGradient id="rg" x1="0" y1="0" x2="0" y2="1"><stop offset="0" stop-color="#e8833a"/><stop offset="0.55" stop-color="#b0508a"/><stop offset="1" stop-color="#6a3fb0"/></linearGradient></defs><path d="M0.4 0.3 H8.2 L10.7 2.8 V13.7 H0.4 Z" fill="#fbfbfb"/><path d="M8.2 0.3 V2.8 H10.7 Z" fill="#bdbdbd"/><circle cx="5.3" cy="7.2" r="3.5" fill="url(#rg)"/><circle cx="5.3" cy="7.2" r="2.6" fill="#2a2230"/><path d="M4.3 5.5 L7.0 7.2 L4.3 8.9 Z" fill="#fff"/></svg>
<span style="left:156.00px;top:754.69px;font-size:11px;line-height:11px;color:#cdcdcd;letter-spacing:-0.115px;">videopl...ck (1).mp4</span>
<svg style="left:269px;top:754.2px;" width="13" height="12" viewBox="0 0 13 12"><path d="M10.30 1.24 L10.79 2.06 L11.14 2.93 L11.34 3.84 L11.40 4.76 L11.31 5.66 L11.08 6.53 L10.72 7.33 L10.24 8.06 L9.65 8.70 L8.99 9.22 L8.25 9.63 L7.48 9.91 L6.68 10.06 L5.87 10.08 L5.09 9.97 L4.34 9.74 L3.66 9.40 L3.04 8.96 L2.51 8.44 L2.08 7.84 L1.75 7.20 L1.54 6.52 L1.44 5.83 L1.45 5.14 L1.57 4.48 L1.79 3.85 L2.10 3.28 L2.50 2.77 L2.96 2.34 L3.47 2.00 L4.03 1.75 L4.60 1.60 L5.18 1.54 L5.75 1.58 L6.30 1.70 L6.81 1.91 L7.27 2.19 L7.66 2.53 L7.99 2.93 L8.25 3.36 L8.43 3.82 L8.53 4.29 L8.55 4.76 L8.49 5.21 L8.37 5.64 L8.18 6.03 L7.94 6.38 L7.65 6.67 L7.33 6.91 L6.98 7.08 L6.62 7.19 L6.26 7.24 L5.90 7.23 L5.57 7.16 L5.26 7.04 L4.98 6.88 L4.74 6.68 L4.55 6.45 L4.41 6.21 L4.31 5.95 L4.26 5.69 L4.26 5.44 L4.29 5.20 L4.37 4.98 L4.47 4.79 L4.61 4.63 L4.76 4.50 L4.92 4.40 L5.09 4.35 L5.25 4.32" fill="none" stroke="#7a7a7a" stroke-width="1.5" stroke-linecap="round" stroke-linejoin="round"/></svg>
<div style="left:288px;top:753px;width:89px;height:14px;background:#0e0e0e;border-radius:3px;"></div>
<span style="left:296.50px;top:754.69px;font-size:11px;line-height:11px;color:#cdcdcd;letter-spacing:0.067px;">None</span>
<svg style="left:359px;top:756.9px;" width="10" height="7.4" viewBox="0 0 10 7.4"><path d="M0.6 0.7 L5.0 6.1000000000000005 L9.4 0.7" stroke="#d8d8d8" stroke-width="1.8" fill="none"/></svg>
<div style="left:386.3px;top:753.6px;width:12.4px;height:11.6px;background:#0e0e0e;border-radius:2px;"></div>
<svg style="left:386px;top:753.6px;" width="13.4" height="11" viewBox="0 0 13.4 11"><path d="M2.1 6.4 C1.6 -1.5 12.1 -1.5 11.6 6.4 Z" fill="#d0d0d0"/><circle cx="5" cy="3.9" r="1.05" fill="#0e0e0e"/><circle cx="8.7" cy="3.9" r="1.05" fill="#0e0e0e"/><rect x="0.3" y="7.6" width="12.8" height="1.15" fill="#d0d0d0"/><rect x="5.85" y="4.6" width="2.1" height="5.7" rx="0.9" fill="#d0d0d0"/></svg>
<div style="left:416.7px;top:753.6px;width:11.7px;height:11.6px;background:#0e0e0e;border-radius:2px;"></div>
<svg style="left:416.7px;top:753.6px;" width="12" height="12" viewBox="0 0 12 12"><path d="M0.9 10.9 L10.9 1.2" stroke="#c0c0c0" stroke-width="1.5"/></svg>
<div style="left:431.4px;top:753.6px;width:12.2px;height:11.6px;background:#0e0e0e;border-radius:2px;"></div>
<span style="left:432.20000000000005px;top:751.64px;font-size:13.2px;line-height:13.2px;color:#d0d0d0;font-style:italic;font-weight:700;font-family:'Liberation Serif',serif;">f</span>
<span style="left:436.20000000000005px;top:754.77px;font-size:10.2px;line-height:10.2px;color:#d0d0d0;font-style:italic;transform:scaleX(1.3);transform-origin:0 0;">x</span>
<div style="left:446.4px;top:754px;width:11.9px;height:11.4px;background:#0e0e0e;border-radius:2px;"></div>
<div style="left:461.34999999999997px;top:754px;width:11.9px;height:11.4px;background:#0e0e0e;border-radius:2px;"></div>
<div style="left:476.29999999999995px;top:754px;width:11.9px;height:11.4px;background:#0e0e0e;border-radius:2px;"></div>
<div style="left:491.25px;top:754px;width:11.9px;height:11.4px;background:#0e0e0e;border-radius:2px;"></div>
<div style="left:2px;top:768px;width:535px;height:1px;background:#181818;"></div>
<div style="left:537px;top:647px;width:1px;height:192px;background:#050505;"></div>
<div style="left:538px;top:667px;width:1040px;height:172px;background:#262626;"></div>
<div style="left:545px;top:618px;width:919px;height:8px;background:#6b6b6b;"></div>
<div style="left:1468px;top:618px;width:110px;height:8px;background:#3e3b37;"></div>
<div style="left:539px;top:618px;width:6px;height:8px;background:#2d8ceb;border-radius:4px 0 0 4px"></div>
<div style="left:1462px;top:618px;width:6px;height:8px;background:#2d8ceb;border-radius:0 4px 4px 0"></div>
<span style="left:538.30px;top:629.96px;font-size:9.5px;line-height:9.5px;color:#c4c4c4;letter-spacing:-0.310px;">0:00s</span>
<div style="left:622px;top:641px;width:1px;height:5px;background:#a0a0a0;"></div>
<span style="left:614.64px;top:629.96px;font-size:9.5px;line-height:9.5px;color:#c4c4c4;">01s</span>
<div style="left:699px;top:641px;width:1px;height:5px;background:#a0a0a0;"></div>
<span style="left:691.44px;top:629.96px;font-size:9.5px;line-height:9.5px;color:#c4c4c4;">02s</span>
<div style="left:776px;top:641px;width:1px;height:5px;background:#a0a0a0;"></div>
<span style="left:768.24px;top:629.96px;font-size:9.5px;line-height:9.5px;color:#c4c4c4;">03s</span>
<div style="left:853px;top:641px;width:1px;height:5px;background:#a0a0a0;"></div>
<span style="left:845.04px;top:629.96px;font-size:9.5px;line-height:9.5px;color:#c4c4c4;">04s</span>
<div style="left:930px;top:641px;width:1px;height:5px;background:#a0a0a0;"></div>
<span style="left:921.84px;top:629.96px;font-size:9.5px;line-height:9.5px;color:#c4c4c4;">05s</span>
<div style="left:1006px;top:641px;width:1px;height:5px;background:#a0a0a0;"></div>
<span style="left:998.64px;top:629.96px;font-size:9.5px;line-height:9.5px;color:#c4c4c4;">06s</span>
<div style="left:1083px;top:641px;width:1px;height:5px;background:#a0a0a0;"></div>
<span style="left:1075.44px;top:629.96px;font-size:9.5px;line-height:9.5px;color:#c4c4c4;">07s</span>
<div style="left:1160px;top:641px;width:1px;height:5px;background:#a0a0a0;"></div>
<span style="left:1152.24px;top:629.96px;font-size:9.5px;line-height:9.5px;color:#c4c4c4;">08s</span>
<div style="left:1237px;top:641px;width:1px;height:5px;background:#a0a0a0;"></div>
<span style="left:1229.04px;top:629.96px;font-size:9.5px;line-height:9.5px;color:#c4c4c4;">09s</span>
<div style="left:1314px;top:641px;width:1px;height:5px;background:#a0a0a0;"></div>
<span style="left:1305.84px;top:629.96px;font-size:9.5px;line-height:9.5px;color:#c4c4c4;">10s</span>
<div style="left:1390px;top:641px;width:1px;height:5px;background:#a0a0a0;"></div>
<span style="left:1382.99px;top:629.96px;font-size:9.5px;line-height:9.5px;color:#c4c4c4;">11s</span>
<div style="left:1467px;top:641px;width:1px;height:5px;background:#a0a0a0;"></div>
<span style="left:1459.44px;top:629.96px;font-size:9.5px;line-height:9.5px;color:#c4c4c4;">12s</span>
<div style="left:1544px;top:641px;width:1px;height:5px;background:#a0a0a0;"></div>
<span style="left:1536.24px;top:629.96px;font-size:9.5px;line-height:9.5px;color:#c4c4c4;">13s</span>
<div style="left:538px;top:646px;width:1040px;height:1px;background:#0a0a0a;"></div>
<div style="left:545px;top:648px;width:1033px;height:14px;background:#606060;"></div>
<div style="left:539px;top:647.5px;width:6px;height:14.5px;background:#3692ee;border-radius:4px 0 0 4px"></div>
<div style="left:538px;top:662px;width:1040px;height:1px;background:#0a0a0a;"></div>
<div style="left:538px;top:663px;width:1040px;height:4px;background:#2a2a2a;"></div>
<div style="left:546px;top:663px;width:3px;height:3px;background:#22c32a;"></div>
<div style="left:538px;top:666px;width:1040px;height:1px;background:#0c0c0c;"></div>
<div style="left:538px;top:667px;width:1040px;height:16px;background:#363636;"></div>
<div style="left:546px;top:667px;width:1032px;height:16px;background:#566663;"></div>
<div style="left:546.6px;top:667.8px;width:1031.4px;height:16px;background:#70827e;border-radius:5px 0 0 0;"></div>
<div style="left:552px;top:667px;width:1026px;height:1px;background:#7a8c88;"></div>
<div style="left:538px;top:683px;width:1040px;height:1px;background:#0c0c0c;"></div>
<div style="left:538px;top:684px;width:1040px;height:16px;background:#363636;"></div>
<div style="left:546px;top:684px;width:1032px;height:16px;background:#566663;"></div>
<div style="left:546.6px;top:684.8px;width:1031.4px;height:16px;background:#70827e;border-radius:5px 0 0 0;"></div>
<div style="left:552px;top:684px;width:1026px;height:1px;background:#7a8c88;"></div>
<div style="left:538px;top:700px;width:1040px;height:1px;background:#0c0c0c;"></div>
<div style="left:538px;top:701px;width:1040px;height:16px;background:#363636;"></div>
<div style="left:538px;top:701px;width:8px;height:16px;background:#5b6f6c;"></div>
<div style="left:546px;top:701px;width:1032px;height:16px;background:#70827e;"></div>
<div style="left:552px;top:701px;width:1026px;height:1px;background:#7a8c88;"></div>
<div style="left:538px;top:717px;width:1040px;height:1px;background:#0c0c0c;"></div>
<div style="left:538px;top:718px;width:1040px;height:16px;background:#363636;"></div>
<div style="left:546px;top:718px;width:1032px;height:16px;background:#566663;"></div>
<div style="left:546.6px;top:718.8px;width:1031.4px;height:16px;background:#70827e;border-radius:5px 0 0 0;"></div>
<div style="left:552px;top:718px;width:1026px;height:1px;background:#7a8c88;"></div>
<div style="left:538px;top:734px;width:1040px;height:1px;background:#0c0c0c;"></div>
<div style="left:538px;top:735px;width:1040px;height:16px;background:#363636;"></div>
<div style="left:538px;top:735px;width:8px;height:16px;background:#5b6f6c;"></div>
<div style="left:546px;top:735px;width:1032px;height:16px;background:#70827e;"></div>
<div style="left:547px;top:735px;width:1px;height:16px;background:#5b6f6c;"></div>
<div style="left:552px;top:735px;width:1026px;height:1px;background:#7a8c88;"></div>
<div style="left:538px;top:751px;width:1040px;height:1px;background:#0c0c0c;"></div>
<div style="left:538px;top:752px;width:1040px;height:16px;background:#363636;"></div>
<div style="left:546px;top:752px;width:920px;height:16px;background:#566663;"></div>
<div style="left:546.6px;top:752.8px;width:919.4px;height:16px;background:#70827e;border-radius:5px 0 0 0;"></div>
<div style="left:552px;top:752px;width:914px;height:1px;background:#7a8c88;"></div>
<svg style="left:1456px;top:752px;" width="10" height="8" viewBox="0 0 10 8"><path d="M2.4 0.8 H9.6 V7.6 C9.6 3.6 7.2 1.2 2.4 0.8 Z" fill="#4f5f5c"/></svg>
<div style="left:538px;top:768px;width:1040px;height:1px;background:#0c0c0c;"></div>
<div style="left:545px;top:640px;width:1px;height:199px;background:#3d96f0;"></div>
<svg style="left:539.5px;top:631.5px;" width="12" height="14" viewBox="0 0 12 14"><path d="M0.4 0.2 H11.4 V4.4 L5.9 13.4 L0.4 4.4 Z" fill="#3d96f0"/><path d="M5.9 4.6 V13" stroke="#c8d8ea" stroke-width="0.8"/></svg>
</div></body></html>
